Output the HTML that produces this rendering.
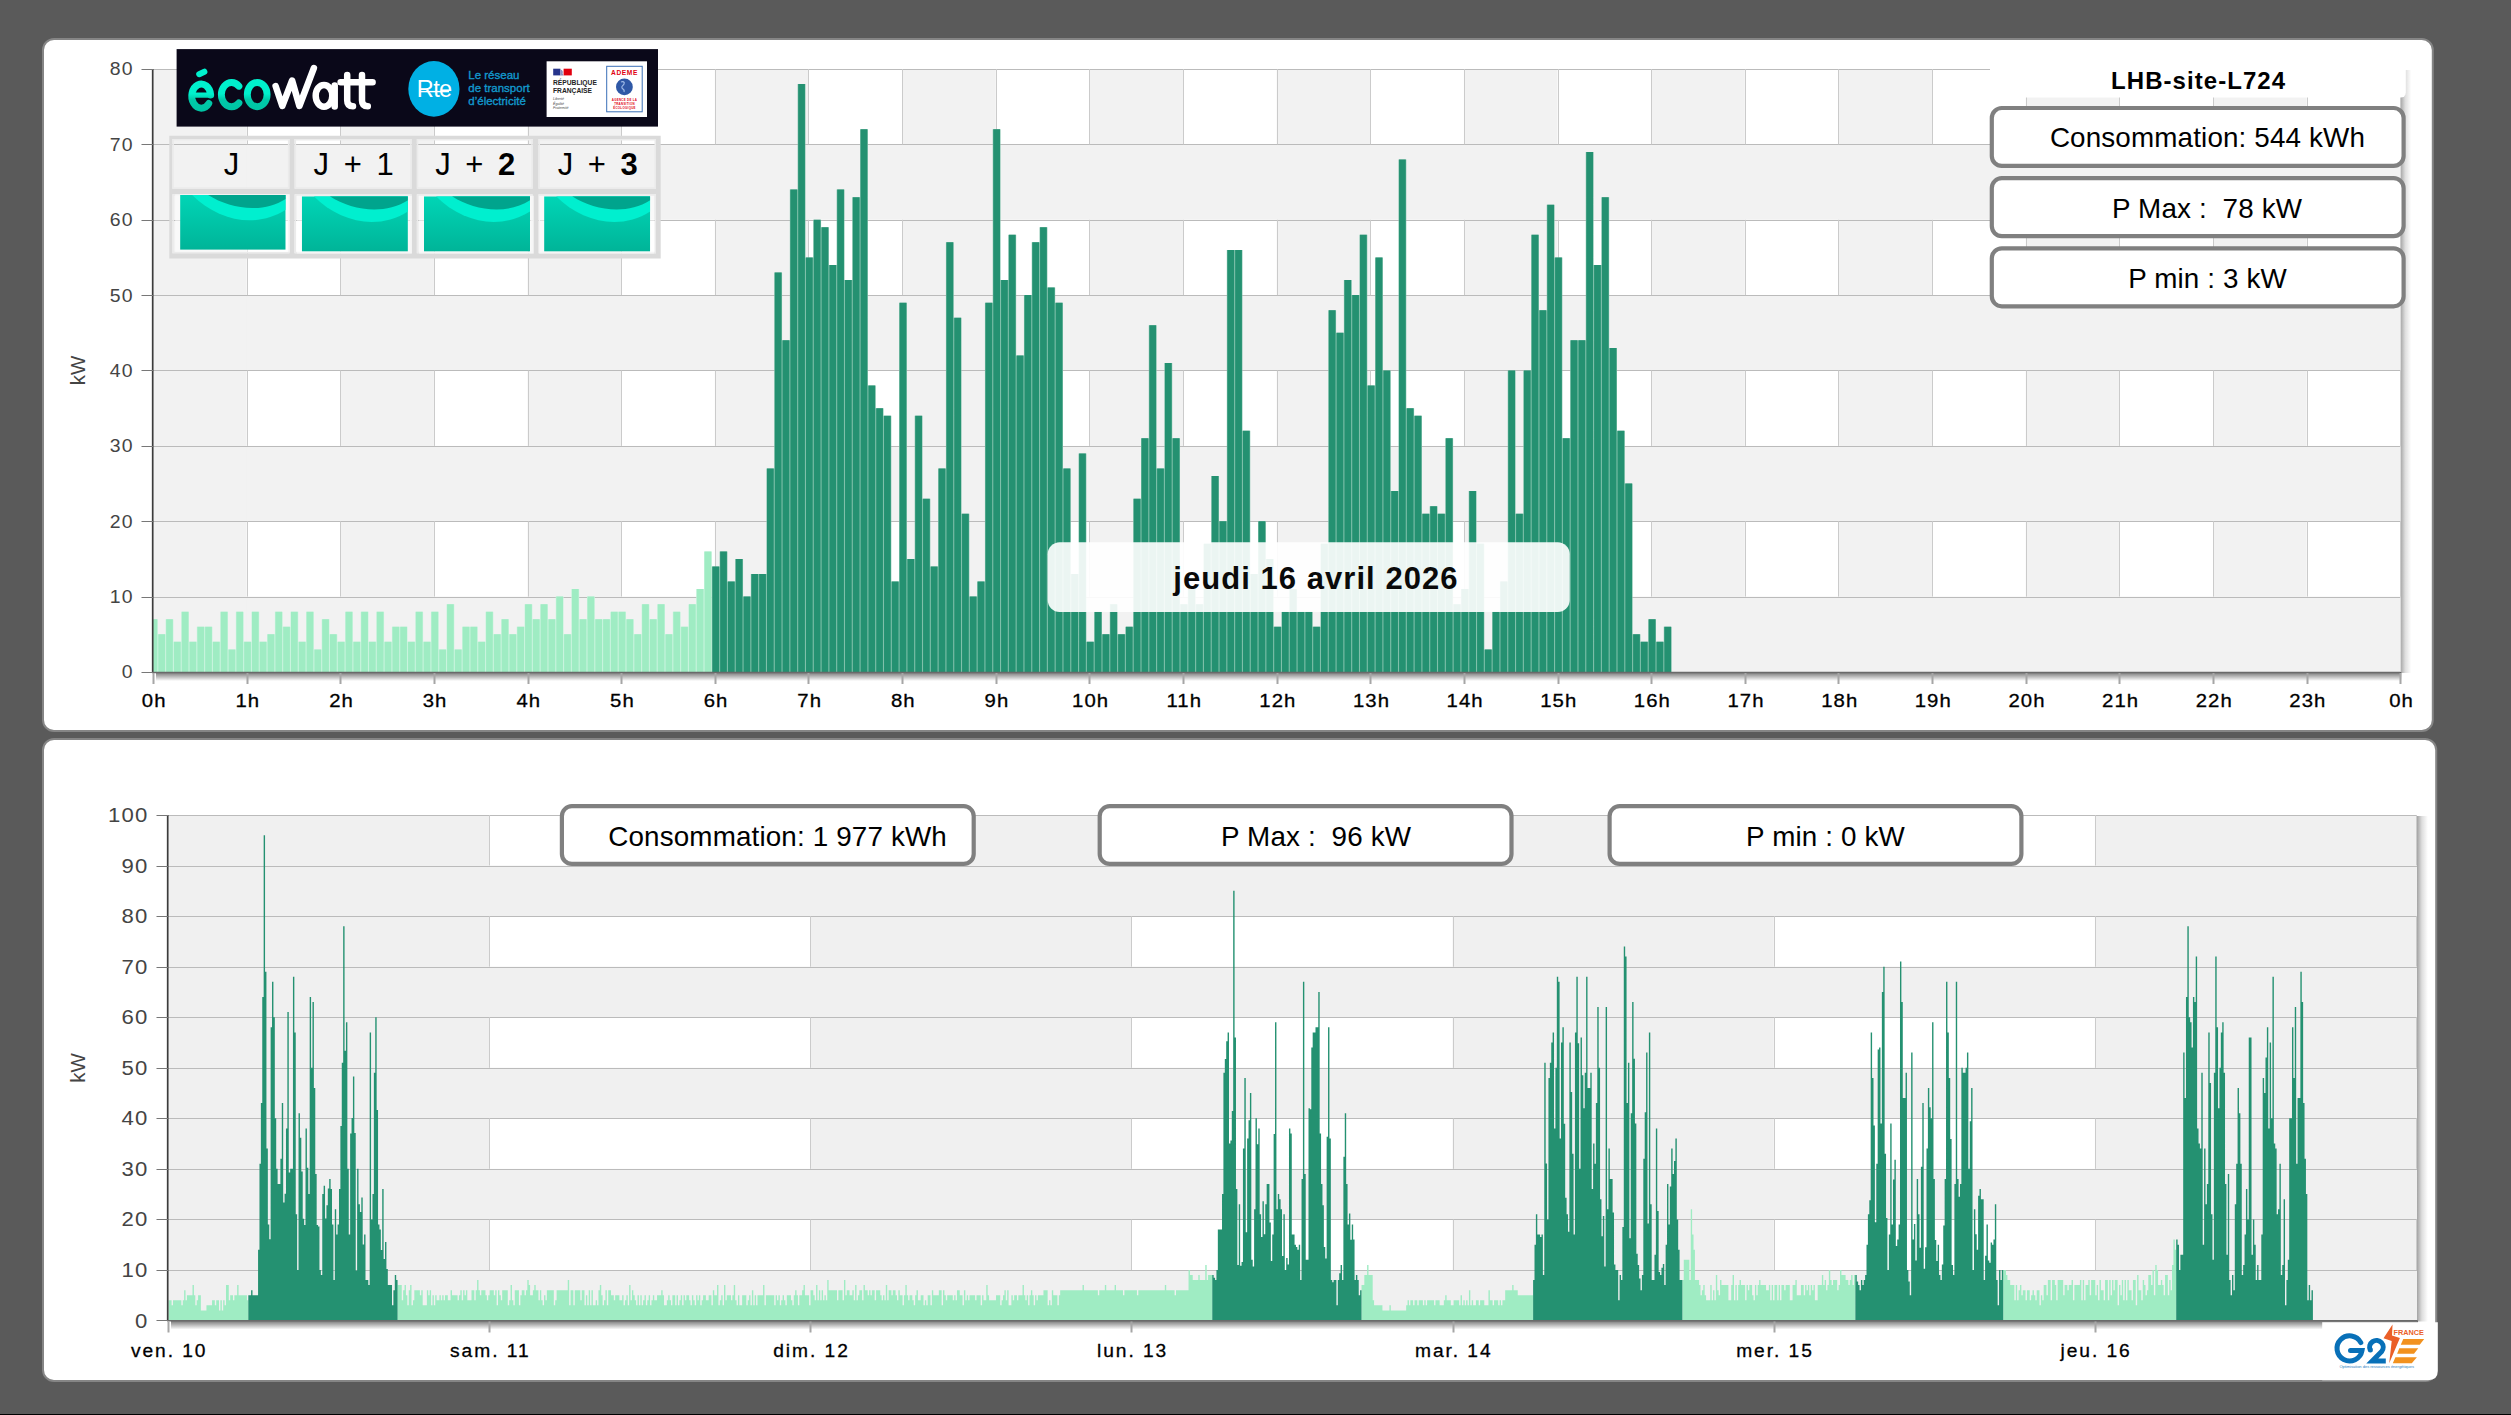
<!DOCTYPE html>
<html><head><meta charset="utf-8"><title>LHB-site-L724</title>
<style>html,body{margin:0;padding:0;width:2511px;height:1415px;overflow:hidden;background:#5a5a5a;font-family:"Liberation Sans", sans-serif}</style>
</head><body>
<svg width="2511" height="1415" viewBox="0 0 2511 1415" style="position:absolute;left:0;top:0;font-family:'Liberation Sans',sans-serif">
<defs>
<linearGradient id="shR" x1="0" x2="1" y1="0" y2="0"><stop offset="0" stop-color="#000" stop-opacity=".36"/><stop offset=".45" stop-color="#000" stop-opacity=".13"/><stop offset="1" stop-color="#000" stop-opacity="0"/></linearGradient>
<linearGradient id="shB" x1="0" x2="0" y1="0" y2="1"><stop offset="0" stop-color="#000" stop-opacity=".55"/><stop offset="1" stop-color="#000" stop-opacity="0"/></linearGradient>
<linearGradient id="teal" x1="0" x2="0" y1="0" y2="1"><stop offset="0" stop-color="#00d5b6"/><stop offset="1" stop-color="#00b498"/></linearGradient>
<linearGradient id="eco" gradientUnits="userSpaceOnUse" x1="0" x2="0" y1="70" y2="111"><stop offset="0" stop-color="#00f2ce"/><stop offset=".58" stop-color="#00f0cc"/><stop offset=".72" stop-color="#00caa9"/><stop offset="1" stop-color="#00c4a4"/></linearGradient>
<symbol id="wave" viewBox="0 0 106 55" preserveAspectRatio="none">
<rect width="106" height="55" fill="url(#teal)"/>
<path d="M12 0 C38 26 76 34 106 15 L106 0 Z" fill="#00efcf"/>
<path d="M28 0 C50 14 82 19 106 4 L106 0 Z" fill="#00a48d"/>
</symbol>
</defs>
<rect width="2511" height="1415" fill="#5a5a5a"/>
<rect y="1414" width="2511" height="1" fill="#000"/>
<rect x="43" y="39" width="2389.8" height="692" rx="11" fill="#fff" stroke="#858585" stroke-width="2"/>
<rect x="43" y="739.1" width="2393.2" height="641.9" rx="11" fill="#fff" stroke="#858585" stroke-width="2"/>
<rect x="2400.3" y="70.0" width="11" height="603.0" fill="url(#shR)"/>
<rect x="156.0" y="672.0" width="2245.3" height="9" fill="url(#shB)"/>
<rect x="153.0" y="69.0" width="2247.3" height="603.0" fill="#fff"/>
<rect x="153.0" y="596.62" width="2247.3" height="75.38" fill="#f2f2f2"/>
<rect x="153.0" y="445.88" width="2247.3" height="75.38" fill="#f2f2f2"/>
<rect x="153.0" y="295.12" width="2247.3" height="75.38" fill="#f2f2f2"/>
<rect x="153.0" y="144.38" width="2247.3" height="75.38" fill="#f2f2f2"/>
<rect x="153.00" y="69.0" width="93.64" height="603.0" fill="#f2f2f2"/>
<rect x="340.27" y="69.0" width="93.64" height="603.0" fill="#f2f2f2"/>
<rect x="527.55" y="69.0" width="93.64" height="603.0" fill="#f2f2f2"/>
<rect x="714.83" y="69.0" width="93.64" height="603.0" fill="#f2f2f2"/>
<rect x="902.10" y="69.0" width="93.64" height="603.0" fill="#f2f2f2"/>
<rect x="1089.38" y="69.0" width="93.64" height="603.0" fill="#f2f2f2"/>
<rect x="1276.65" y="69.0" width="93.64" height="603.0" fill="#f2f2f2"/>
<rect x="1463.92" y="69.0" width="93.64" height="603.0" fill="#f2f2f2"/>
<rect x="1651.20" y="69.0" width="93.64" height="603.0" fill="#f2f2f2"/>
<rect x="1838.48" y="69.0" width="93.64" height="603.0" fill="#f2f2f2"/>
<rect x="2025.75" y="69.0" width="93.64" height="603.0" fill="#f2f2f2"/>
<rect x="2213.03" y="69.0" width="93.64" height="603.0" fill="#f2f2f2"/>
<path d="M153.0 597.5H2400.3M153.0 521.5H2400.3M153.0 446.5H2400.3M153.0 370.5H2400.3M153.0 295.5H2400.3M153.0 220.5H2400.3M153.0 144.5H2400.3M153.0 69.5H2400.3" stroke="#bbb" stroke-width="1" fill="none"/>
<path d="M247.5 596.6V521.2M247.5 445.9V370.5M247.5 295.1V219.8M247.5 144.4V69.0M340.5 596.6V521.2M340.5 445.9V370.5M340.5 295.1V219.8M340.5 144.4V69.0M434.5 596.6V521.2M434.5 445.9V370.5M434.5 295.1V219.8M434.5 144.4V69.0M528.5 596.6V521.2M528.5 445.9V370.5M528.5 295.1V219.8M528.5 144.4V69.0M621.5 596.6V521.2M621.5 445.9V370.5M621.5 295.1V219.8M621.5 144.4V69.0M715.5 596.6V521.2M715.5 445.9V370.5M715.5 295.1V219.8M715.5 144.4V69.0M808.5 596.6V521.2M808.5 445.9V370.5M808.5 295.1V219.8M808.5 144.4V69.0M902.5 596.6V521.2M902.5 445.9V370.5M902.5 295.1V219.8M902.5 144.4V69.0M996.5 596.6V521.2M996.5 445.9V370.5M996.5 295.1V219.8M996.5 144.4V69.0M1089.5 596.6V521.2M1089.5 445.9V370.5M1089.5 295.1V219.8M1089.5 144.4V69.0M1183.5 596.6V521.2M1183.5 445.9V370.5M1183.5 295.1V219.8M1183.5 144.4V69.0M1277.5 596.6V521.2M1277.5 445.9V370.5M1277.5 295.1V219.8M1277.5 144.4V69.0M1370.5 596.6V521.2M1370.5 445.9V370.5M1370.5 295.1V219.8M1370.5 144.4V69.0M1464.5 596.6V521.2M1464.5 445.9V370.5M1464.5 295.1V219.8M1464.5 144.4V69.0M1558.5 596.6V521.2M1558.5 445.9V370.5M1558.5 295.1V219.8M1558.5 144.4V69.0M1651.5 596.6V521.2M1651.5 445.9V370.5M1651.5 295.1V219.8M1651.5 144.4V69.0M1745.5 596.6V521.2M1745.5 445.9V370.5M1745.5 295.1V219.8M1745.5 144.4V69.0M1838.5 596.6V521.2M1838.5 445.9V370.5M1838.5 295.1V219.8M1838.5 144.4V69.0M1932.5 596.6V521.2M1932.5 445.9V370.5M1932.5 295.1V219.8M1932.5 144.4V69.0M2026.5 596.6V521.2M2026.5 445.9V370.5M2026.5 295.1V219.8M2026.5 144.4V69.0M2119.5 596.6V521.2M2119.5 445.9V370.5M2119.5 295.1V219.8M2119.5 144.4V69.0M2213.5 596.6V521.2M2213.5 445.9V370.5M2213.5 295.1V219.8M2213.5 144.4V69.0M2307.5 596.6V521.2M2307.5 445.9V370.5M2307.5 295.1V219.8M2307.5 144.4V69.0M2400.5 596.6V521.2M2400.5 445.9V370.5M2400.5 295.1V219.8M2400.5 144.4V69.0" stroke="#cbcbcb" stroke-width="1" fill="none"/>
<path d="M153.00 672.0V619.24H157.80V672.0ZM157.80 672.0V634.31H165.60V672.0ZM165.60 672.0V619.24H173.41V672.0ZM173.41 672.0V641.85H181.21V672.0ZM181.21 672.0V611.70H189.01V672.0ZM189.01 672.0V641.85H196.82V672.0ZM196.82 672.0V626.77H204.62V672.0ZM204.62 672.0V626.77H212.42V672.0ZM212.42 672.0V641.85H220.23V672.0ZM220.23 672.0V611.70H228.03V672.0ZM228.03 672.0V649.39H235.83V672.0ZM235.83 672.0V611.70H243.64V672.0ZM243.64 672.0V641.85H251.44V672.0ZM251.44 672.0V611.70H259.24V672.0ZM259.24 672.0V641.85H267.05V672.0ZM267.05 672.0V634.31H274.85V672.0ZM274.85 672.0V611.70H282.65V672.0ZM282.65 672.0V626.77H290.45V672.0ZM290.45 672.0V611.70H298.26V672.0ZM298.26 672.0V641.85H306.06V672.0ZM306.06 672.0V611.70H313.86V672.0ZM313.86 672.0V649.39H321.67V672.0ZM321.67 672.0V619.24H329.47V672.0ZM329.47 672.0V634.31H337.27V672.0ZM337.27 672.0V641.85H345.08V672.0ZM345.08 672.0V611.70H352.88V672.0ZM352.88 672.0V641.85H360.68V672.0ZM360.68 672.0V611.70H368.49V672.0ZM368.49 672.0V641.85H376.29V672.0ZM376.29 672.0V611.70H384.09V672.0ZM384.09 672.0V641.85H391.90V672.0ZM391.90 672.0V626.77H399.70V672.0ZM399.70 672.0V626.77H407.50V672.0ZM407.50 672.0V641.85H415.30V672.0ZM415.30 672.0V611.70H423.11V672.0ZM423.11 672.0V641.85H430.91V672.0ZM430.91 672.0V611.70H438.71V672.0ZM438.71 672.0V649.39H446.52V672.0ZM446.52 672.0V604.16H454.32V672.0ZM454.32 672.0V649.39H462.12V672.0ZM462.12 672.0V626.77H469.93V672.0ZM469.93 672.0V626.77H477.73V672.0ZM477.73 672.0V641.85H485.53V672.0ZM485.53 672.0V611.70H493.34V672.0ZM493.34 672.0V634.31H501.14V672.0ZM501.14 672.0V619.24H508.94V672.0ZM508.94 672.0V634.31H516.75V672.0ZM516.75 672.0V626.77H524.55V672.0ZM524.55 672.0V604.16H532.35V672.0ZM532.35 672.0V619.24H540.15V672.0ZM540.15 672.0V604.16H547.96V672.0ZM547.96 672.0V619.24H555.76V672.0ZM555.76 672.0V596.62H563.56V672.0ZM563.56 672.0V634.31H571.37V672.0ZM571.37 672.0V589.09H579.17V672.0ZM579.17 672.0V619.24H586.97V672.0ZM586.97 672.0V596.62H594.78V672.0ZM594.78 672.0V619.24H602.58V672.0ZM602.58 672.0V619.24H610.38V672.0ZM610.38 672.0V611.70H618.19V672.0ZM618.19 672.0V611.70H625.99V672.0ZM625.99 672.0V619.24H633.79V672.0ZM633.79 672.0V634.31H641.60V672.0ZM641.60 672.0V604.16H649.40V672.0ZM649.40 672.0V619.24H657.20V672.0ZM657.20 672.0V604.16H665.00V672.0ZM665.00 672.0V634.31H672.81V672.0ZM672.81 672.0V611.70H680.61V672.0ZM680.61 672.0V626.77H688.41V672.0ZM688.41 672.0V604.16H696.22V672.0ZM696.22 672.0V589.09H704.02V672.0ZM704.02 672.0V551.40H711.82V672.0Z" fill="#c9f4de"/>
<path d="M153.00 672.0V619.24H157.25V672.0ZM158.35 672.0V634.31H165.05V672.0ZM166.15 672.0V619.24H172.86V672.0ZM173.96 672.0V641.85H180.66V672.0ZM181.76 672.0V611.70H188.46V672.0ZM189.56 672.0V641.85H196.27V672.0ZM197.37 672.0V626.77H204.07V672.0ZM205.17 672.0V626.77H211.87V672.0ZM212.97 672.0V641.85H219.68V672.0ZM220.78 672.0V611.70H227.48V672.0ZM228.58 672.0V649.39H235.28V672.0ZM236.38 672.0V611.70H243.09V672.0ZM244.19 672.0V641.85H250.89V672.0ZM251.99 672.0V611.70H258.69V672.0ZM259.79 672.0V641.85H266.50V672.0ZM267.60 672.0V634.31H274.30V672.0ZM275.40 672.0V611.70H282.10V672.0ZM283.20 672.0V626.77H289.90V672.0ZM291.00 672.0V611.70H297.71V672.0ZM298.81 672.0V641.85H305.51V672.0ZM306.61 672.0V611.70H313.31V672.0ZM314.41 672.0V649.39H321.12V672.0ZM322.22 672.0V619.24H328.92V672.0ZM330.02 672.0V634.31H336.72V672.0ZM337.82 672.0V641.85H344.53V672.0ZM345.63 672.0V611.70H352.33V672.0ZM353.43 672.0V641.85H360.13V672.0ZM361.23 672.0V611.70H367.94V672.0ZM369.04 672.0V641.85H375.74V672.0ZM376.84 672.0V611.70H383.54V672.0ZM384.64 672.0V641.85H391.35V672.0ZM392.45 672.0V626.77H399.15V672.0ZM400.25 672.0V626.77H406.95V672.0ZM408.05 672.0V641.85H414.75V672.0ZM415.85 672.0V611.70H422.56V672.0ZM423.66 672.0V641.85H430.36V672.0ZM431.46 672.0V611.70H438.16V672.0ZM439.26 672.0V649.39H445.97V672.0ZM447.07 672.0V604.16H453.77V672.0ZM454.87 672.0V649.39H461.57V672.0ZM462.67 672.0V626.77H469.38V672.0ZM470.48 672.0V626.77H477.18V672.0ZM478.28 672.0V641.85H484.98V672.0ZM486.08 672.0V611.70H492.79V672.0ZM493.89 672.0V634.31H500.59V672.0ZM501.69 672.0V619.24H508.39V672.0ZM509.49 672.0V634.31H516.20V672.0ZM517.30 672.0V626.77H524.00V672.0ZM525.10 672.0V604.16H531.80V672.0ZM532.90 672.0V619.24H539.60V672.0ZM540.70 672.0V604.16H547.41V672.0ZM548.51 672.0V619.24H555.21V672.0ZM556.31 672.0V596.62H563.01V672.0ZM564.11 672.0V634.31H570.82V672.0ZM571.92 672.0V589.09H578.62V672.0ZM579.72 672.0V619.24H586.42V672.0ZM587.52 672.0V596.62H594.23V672.0ZM595.33 672.0V619.24H602.03V672.0ZM603.13 672.0V619.24H609.83V672.0ZM610.93 672.0V611.70H617.64V672.0ZM618.74 672.0V611.70H625.44V672.0ZM626.54 672.0V619.24H633.24V672.0ZM634.34 672.0V634.31H641.05V672.0ZM642.15 672.0V604.16H648.85V672.0ZM649.95 672.0V619.24H656.65V672.0ZM657.75 672.0V604.16H664.45V672.0ZM665.55 672.0V634.31H672.26V672.0ZM673.36 672.0V611.70H680.06V672.0ZM681.16 672.0V626.77H687.86V672.0ZM688.96 672.0V604.16H695.67V672.0ZM696.77 672.0V589.09H703.47V672.0ZM704.57 672.0V551.40H711.27V672.0Z" fill="#9fecc3"/>
<path d="M711.82 672.0V566.48H719.63V672.0ZM719.63 672.0V551.40H727.43V672.0ZM727.43 672.0V581.55H735.23V672.0ZM735.23 672.0V558.94H743.04V672.0ZM743.04 672.0V596.62H750.84V672.0ZM750.84 672.0V574.01H758.64V672.0ZM758.64 672.0V574.01H766.45V672.0ZM766.45 672.0V468.49H774.25V672.0ZM774.25 672.0V272.51H782.05V672.0ZM782.05 672.0V340.35H789.85V672.0ZM789.85 672.0V189.60H797.66V672.0ZM797.66 672.0V84.08H805.46V672.0ZM805.46 672.0V257.44H813.26V672.0ZM813.26 672.0V219.75H821.07V672.0ZM821.07 672.0V227.29H828.87V672.0ZM828.87 672.0V264.98H836.67V672.0ZM836.67 672.0V189.60H844.48V672.0ZM844.48 672.0V280.05H852.28V672.0ZM852.28 672.0V197.14H860.08V672.0ZM860.08 672.0V129.30H867.89V672.0ZM867.89 672.0V385.57H875.69V672.0ZM875.69 672.0V408.19H883.49V672.0ZM883.49 672.0V415.73H891.30V672.0ZM891.30 672.0V581.55H899.10V672.0ZM899.10 672.0V302.66H906.90V672.0ZM906.90 672.0V558.94H914.70V672.0ZM914.70 672.0V415.73H922.51V672.0ZM922.51 672.0V498.64H930.31V672.0ZM930.31 672.0V566.48H938.11V672.0ZM938.11 672.0V468.49H945.92V672.0ZM945.92 672.0V242.36H953.72V672.0ZM953.72 672.0V317.74H961.52V672.0ZM961.52 672.0V513.71H969.33V672.0ZM969.33 672.0V596.62H977.13V672.0ZM977.13 672.0V581.55H984.93V672.0ZM984.93 672.0V302.66H992.74V672.0ZM992.74 672.0V129.30H1000.54V672.0ZM1000.54 672.0V280.05H1008.34V672.0ZM1008.34 672.0V234.83H1016.15V672.0ZM1016.15 672.0V355.43H1023.95V672.0ZM1023.95 672.0V295.12H1031.75V672.0ZM1031.75 672.0V242.36H1039.55V672.0ZM1039.55 672.0V227.29H1047.36V672.0ZM1047.36 672.0V287.59H1055.16V672.0ZM1055.16 672.0V302.66H1062.96V672.0ZM1062.96 672.0V468.49H1070.77V672.0ZM1070.77 672.0V574.01H1078.57V672.0ZM1078.57 672.0V453.41H1086.37V672.0ZM1086.37 672.0V641.85H1094.18V672.0ZM1094.18 672.0V611.70H1101.98V672.0ZM1101.98 672.0V634.31H1109.78V672.0ZM1109.78 672.0V604.16H1117.59V672.0ZM1117.59 672.0V634.31H1125.39V672.0ZM1125.39 672.0V626.77H1133.19V672.0ZM1133.19 672.0V498.64H1141.00V672.0ZM1141.00 672.0V438.34H1148.80V672.0ZM1148.80 672.0V325.28H1156.60V672.0ZM1156.60 672.0V468.49H1164.40V672.0ZM1164.40 672.0V362.96H1172.21V672.0ZM1172.21 672.0V438.34H1180.01V672.0ZM1180.01 672.0V604.16H1187.81V672.0ZM1187.81 672.0V589.09H1195.62V672.0ZM1195.62 672.0V604.16H1203.42V672.0ZM1203.42 672.0V543.86H1211.22V672.0ZM1211.22 672.0V476.02H1219.03V672.0ZM1219.03 672.0V521.25H1226.83V672.0ZM1226.83 672.0V249.90H1234.63V672.0ZM1234.63 672.0V249.90H1242.44V672.0ZM1242.44 672.0V430.80H1250.24V672.0ZM1250.24 672.0V574.01H1258.04V672.0ZM1258.04 672.0V521.25H1265.85V672.0ZM1265.85 672.0V558.94H1273.65V672.0ZM1273.65 672.0V626.77H1281.45V672.0ZM1281.45 672.0V611.70H1289.25V672.0ZM1289.25 672.0V589.09H1297.06V672.0ZM1297.06 672.0V611.70H1304.86V672.0ZM1304.86 672.0V611.70H1312.66V672.0ZM1312.66 672.0V626.77H1320.47V672.0ZM1320.47 672.0V543.86H1328.27V672.0ZM1328.27 672.0V310.20H1336.07V672.0ZM1336.07 672.0V332.81H1343.88V672.0ZM1343.88 672.0V280.05H1351.68V672.0ZM1351.68 672.0V295.12H1359.48V672.0ZM1359.48 672.0V234.83H1367.29V672.0ZM1367.29 672.0V385.57H1375.09V672.0ZM1375.09 672.0V257.44H1382.89V672.0ZM1382.89 672.0V370.50H1390.70V672.0ZM1390.70 672.0V491.10H1398.50V672.0ZM1398.50 672.0V159.45H1406.30V672.0ZM1406.30 672.0V408.19H1414.10V672.0ZM1414.10 672.0V415.73H1421.91V672.0ZM1421.91 672.0V513.71H1429.71V672.0ZM1429.71 672.0V506.18H1437.51V672.0ZM1437.51 672.0V513.71H1445.32V672.0ZM1445.32 672.0V438.34H1453.12V672.0ZM1453.12 672.0V604.16H1460.92V672.0ZM1460.92 672.0V589.09H1468.73V672.0ZM1468.73 672.0V491.10H1476.53V672.0ZM1476.53 672.0V543.86H1484.33V672.0ZM1484.33 672.0V649.39H1492.14V672.0ZM1492.14 672.0V611.70H1499.94V672.0ZM1499.94 672.0V581.55H1507.74V672.0ZM1507.74 672.0V370.50H1515.55V672.0ZM1515.55 672.0V513.71H1523.35V672.0ZM1523.35 672.0V370.50H1531.15V672.0ZM1531.15 672.0V234.83H1538.95V672.0ZM1538.95 672.0V310.20H1546.76V672.0ZM1546.76 672.0V204.68H1554.56V672.0ZM1554.56 672.0V257.44H1562.36V672.0ZM1562.36 672.0V438.34H1570.17V672.0ZM1570.17 672.0V340.35H1577.97V672.0ZM1577.97 672.0V340.35H1585.77V672.0ZM1585.77 672.0V151.91H1593.58V672.0ZM1593.58 672.0V264.98H1601.38V672.0ZM1601.38 672.0V197.14H1609.18V672.0ZM1609.18 672.0V347.89H1616.99V672.0ZM1616.99 672.0V430.80H1624.79V672.0ZM1624.79 672.0V483.56H1632.59V672.0ZM1632.59 672.0V634.31H1640.40V672.0ZM1640.40 672.0V641.85H1648.20V672.0ZM1648.20 672.0V619.24H1656.00V672.0ZM1656.00 672.0V641.85H1663.80V672.0ZM1663.80 672.0V626.77H1671.61V672.0Z" fill="#7fc0aa"/>
<path d="M712.37 672.0V566.48H719.08V672.0ZM720.18 672.0V551.40H726.88V672.0ZM727.98 672.0V581.55H734.68V672.0ZM735.78 672.0V558.94H742.49V672.0ZM743.59 672.0V596.62H750.29V672.0ZM751.39 672.0V574.01H758.09V672.0ZM759.19 672.0V574.01H765.90V672.0ZM767.00 672.0V468.49H773.70V672.0ZM774.80 672.0V272.51H781.50V672.0ZM782.60 672.0V340.35H789.30V672.0ZM790.40 672.0V189.60H797.11V672.0ZM798.21 672.0V84.08H804.91V672.0ZM806.01 672.0V257.44H812.71V672.0ZM813.81 672.0V219.75H820.52V672.0ZM821.62 672.0V227.29H828.32V672.0ZM829.42 672.0V264.98H836.12V672.0ZM837.22 672.0V189.60H843.93V672.0ZM845.03 672.0V280.05H851.73V672.0ZM852.83 672.0V197.14H859.53V672.0ZM860.63 672.0V129.30H867.34V672.0ZM868.44 672.0V385.57H875.14V672.0ZM876.24 672.0V408.19H882.94V672.0ZM884.04 672.0V415.73H890.75V672.0ZM891.85 672.0V581.55H898.55V672.0ZM899.65 672.0V302.66H906.35V672.0ZM907.45 672.0V558.94H914.15V672.0ZM915.25 672.0V415.73H921.96V672.0ZM923.06 672.0V498.64H929.76V672.0ZM930.86 672.0V566.48H937.56V672.0ZM938.66 672.0V468.49H945.37V672.0ZM946.47 672.0V242.36H953.17V672.0ZM954.27 672.0V317.74H960.97V672.0ZM962.07 672.0V513.71H968.78V672.0ZM969.88 672.0V596.62H976.58V672.0ZM977.68 672.0V581.55H984.38V672.0ZM985.48 672.0V302.66H992.19V672.0ZM993.29 672.0V129.30H999.99V672.0ZM1001.09 672.0V280.05H1007.79V672.0ZM1008.89 672.0V234.83H1015.60V672.0ZM1016.70 672.0V355.43H1023.40V672.0ZM1024.50 672.0V295.12H1031.20V672.0ZM1032.30 672.0V242.36H1039.00V672.0ZM1040.10 672.0V227.29H1046.81V672.0ZM1047.91 672.0V287.59H1054.61V672.0ZM1055.71 672.0V302.66H1062.41V672.0ZM1063.51 672.0V468.49H1070.22V672.0ZM1071.32 672.0V574.01H1078.02V672.0ZM1079.12 672.0V453.41H1085.82V672.0ZM1086.92 672.0V641.85H1093.63V672.0ZM1094.73 672.0V611.70H1101.43V672.0ZM1102.53 672.0V634.31H1109.23V672.0ZM1110.33 672.0V604.16H1117.04V672.0ZM1118.14 672.0V634.31H1124.84V672.0ZM1125.94 672.0V626.77H1132.64V672.0ZM1133.74 672.0V498.64H1140.45V672.0ZM1141.55 672.0V438.34H1148.25V672.0ZM1149.35 672.0V325.28H1156.05V672.0ZM1157.15 672.0V468.49H1163.85V672.0ZM1164.95 672.0V362.96H1171.66V672.0ZM1172.76 672.0V438.34H1179.46V672.0ZM1180.56 672.0V604.16H1187.26V672.0ZM1188.36 672.0V589.09H1195.07V672.0ZM1196.17 672.0V604.16H1202.87V672.0ZM1203.97 672.0V543.86H1210.67V672.0ZM1211.77 672.0V476.02H1218.48V672.0ZM1219.58 672.0V521.25H1226.28V672.0ZM1227.38 672.0V249.90H1234.08V672.0ZM1235.18 672.0V249.90H1241.89V672.0ZM1242.99 672.0V430.80H1249.69V672.0ZM1250.79 672.0V574.01H1257.49V672.0ZM1258.59 672.0V521.25H1265.30V672.0ZM1266.40 672.0V558.94H1273.10V672.0ZM1274.20 672.0V626.77H1280.90V672.0ZM1282.00 672.0V611.70H1288.70V672.0ZM1289.80 672.0V589.09H1296.51V672.0ZM1297.61 672.0V611.70H1304.31V672.0ZM1305.41 672.0V611.70H1312.11V672.0ZM1313.21 672.0V626.77H1319.92V672.0ZM1321.02 672.0V543.86H1327.72V672.0ZM1328.82 672.0V310.20H1335.52V672.0ZM1336.62 672.0V332.81H1343.33V672.0ZM1344.43 672.0V280.05H1351.13V672.0ZM1352.23 672.0V295.12H1358.93V672.0ZM1360.03 672.0V234.83H1366.74V672.0ZM1367.84 672.0V385.57H1374.54V672.0ZM1375.64 672.0V257.44H1382.34V672.0ZM1383.44 672.0V370.50H1390.15V672.0ZM1391.25 672.0V491.10H1397.95V672.0ZM1399.05 672.0V159.45H1405.75V672.0ZM1406.85 672.0V408.19H1413.55V672.0ZM1414.65 672.0V415.73H1421.36V672.0ZM1422.46 672.0V513.71H1429.16V672.0ZM1430.26 672.0V506.18H1436.96V672.0ZM1438.06 672.0V513.71H1444.77V672.0ZM1445.87 672.0V438.34H1452.57V672.0ZM1453.67 672.0V604.16H1460.37V672.0ZM1461.47 672.0V589.09H1468.18V672.0ZM1469.28 672.0V491.10H1475.98V672.0ZM1477.08 672.0V543.86H1483.78V672.0ZM1484.88 672.0V649.39H1491.59V672.0ZM1492.69 672.0V611.70H1499.39V672.0ZM1500.49 672.0V581.55H1507.19V672.0ZM1508.29 672.0V370.50H1515.00V672.0ZM1516.10 672.0V513.71H1522.80V672.0ZM1523.90 672.0V370.50H1530.60V672.0ZM1531.70 672.0V234.83H1538.40V672.0ZM1539.50 672.0V310.20H1546.21V672.0ZM1547.31 672.0V204.68H1554.01V672.0ZM1555.11 672.0V257.44H1561.81V672.0ZM1562.91 672.0V438.34H1569.62V672.0ZM1570.72 672.0V340.35H1577.42V672.0ZM1578.52 672.0V340.35H1585.22V672.0ZM1586.32 672.0V151.91H1593.03V672.0ZM1594.13 672.0V264.98H1600.83V672.0ZM1601.93 672.0V197.14H1608.63V672.0ZM1609.73 672.0V347.89H1616.44V672.0ZM1617.54 672.0V430.80H1624.24V672.0ZM1625.34 672.0V483.56H1632.04V672.0ZM1633.14 672.0V634.31H1639.85V672.0ZM1640.95 672.0V641.85H1647.65V672.0ZM1648.75 672.0V619.24H1655.45V672.0ZM1656.55 672.0V641.85H1663.25V672.0ZM1664.35 672.0V626.77H1671.06V672.0Z" fill="#249171"/>
<path d="M152.7 69.0V672.5" stroke="#3c3c3c" stroke-width="1.7" fill="none"/>
<path d="M152.0 672.5H2400.3" stroke="#6a6a6a" stroke-width="1.6" fill="none"/>
<path d="M141.5 672.5H153.0M141.5 597.5H153.0M141.5 521.5H153.0M141.5 446.5H153.0M141.5 370.5H153.0M141.5 295.5H153.0M141.5 220.5H153.0M141.5 144.5H153.0M141.5 69.5H153.0" stroke="#777" stroke-width="1.2" fill="none"/>
<path d="M153.5 673.0V684.0M247.5 673.0V684.0M340.5 673.0V684.0M434.5 673.0V684.0M528.5 673.0V684.0M621.5 673.0V684.0M715.5 673.0V684.0M808.5 673.0V684.0M902.5 673.0V684.0M996.5 673.0V684.0M1089.5 673.0V684.0M1183.5 673.0V684.0M1277.5 673.0V684.0M1370.5 673.0V684.0M1464.5 673.0V684.0M1558.5 673.0V684.0M1651.5 673.0V684.0M1745.5 673.0V684.0M1838.5 673.0V684.0M1932.5 673.0V684.0M2026.5 673.0V684.0M2119.5 673.0V684.0M2213.5 673.0V684.0M2307.5 673.0V684.0M2400.5 673.0V684.0" stroke="#a6a6a6" stroke-width="2" fill="none"/>
<text transform="translate(133.6 678.4) scale(1.08 1)" text-anchor="end" font-size="18" letter-spacing="1" fill="#444">0</text>
<text transform="translate(133.6 603.0) scale(1.08 1)" text-anchor="end" font-size="18" letter-spacing="1" fill="#444">10</text>
<text transform="translate(133.6 527.6) scale(1.08 1)" text-anchor="end" font-size="18" letter-spacing="1" fill="#444">20</text>
<text transform="translate(133.6 452.3) scale(1.08 1)" text-anchor="end" font-size="18" letter-spacing="1" fill="#444">30</text>
<text transform="translate(133.6 376.9) scale(1.08 1)" text-anchor="end" font-size="18" letter-spacing="1" fill="#444">40</text>
<text transform="translate(133.6 301.5) scale(1.08 1)" text-anchor="end" font-size="18" letter-spacing="1" fill="#444">50</text>
<text transform="translate(133.6 226.2) scale(1.08 1)" text-anchor="end" font-size="18" letter-spacing="1" fill="#444">60</text>
<text transform="translate(133.6 150.8) scale(1.08 1)" text-anchor="end" font-size="18" letter-spacing="1" fill="#444">70</text>
<text transform="translate(133.6 75.4) scale(1.08 1)" text-anchor="end" font-size="18" letter-spacing="1" fill="#444">80</text>
<text transform="translate(154.2 707.2) scale(1.06 1)" text-anchor="middle" font-size="19.2" letter-spacing="1" fill="#000" stroke="#000" stroke-width=".3">0h</text>
<text transform="translate(247.8 707.2) scale(1.06 1)" text-anchor="middle" font-size="19.2" letter-spacing="1" fill="#000" stroke="#000" stroke-width=".3">1h</text>
<text transform="translate(341.5 707.2) scale(1.06 1)" text-anchor="middle" font-size="19.2" letter-spacing="1" fill="#000" stroke="#000" stroke-width=".3">2h</text>
<text transform="translate(435.1 707.2) scale(1.06 1)" text-anchor="middle" font-size="19.2" letter-spacing="1" fill="#000" stroke="#000" stroke-width=".3">3h</text>
<text transform="translate(528.8 707.2) scale(1.06 1)" text-anchor="middle" font-size="19.2" letter-spacing="1" fill="#000" stroke="#000" stroke-width=".3">4h</text>
<text transform="translate(622.4 707.2) scale(1.06 1)" text-anchor="middle" font-size="19.2" letter-spacing="1" fill="#000" stroke="#000" stroke-width=".3">5h</text>
<text transform="translate(716.0 707.2) scale(1.06 1)" text-anchor="middle" font-size="19.2" letter-spacing="1" fill="#000" stroke="#000" stroke-width=".3">6h</text>
<text transform="translate(809.7 707.2) scale(1.06 1)" text-anchor="middle" font-size="19.2" letter-spacing="1" fill="#000" stroke="#000" stroke-width=".3">7h</text>
<text transform="translate(903.3 707.2) scale(1.06 1)" text-anchor="middle" font-size="19.2" letter-spacing="1" fill="#000" stroke="#000" stroke-width=".3">8h</text>
<text transform="translate(996.9 707.2) scale(1.06 1)" text-anchor="middle" font-size="19.2" letter-spacing="1" fill="#000" stroke="#000" stroke-width=".3">9h</text>
<text transform="translate(1090.6 707.2) scale(1.06 1)" text-anchor="middle" font-size="19.2" letter-spacing="1" fill="#000" stroke="#000" stroke-width=".3">10h</text>
<text transform="translate(1184.2 707.2) scale(1.06 1)" text-anchor="middle" font-size="19.2" letter-spacing="1" fill="#000" stroke="#000" stroke-width=".3">11h</text>
<text transform="translate(1277.9 707.2) scale(1.06 1)" text-anchor="middle" font-size="19.2" letter-spacing="1" fill="#000" stroke="#000" stroke-width=".3">12h</text>
<text transform="translate(1371.5 707.2) scale(1.06 1)" text-anchor="middle" font-size="19.2" letter-spacing="1" fill="#000" stroke="#000" stroke-width=".3">13h</text>
<text transform="translate(1465.1 707.2) scale(1.06 1)" text-anchor="middle" font-size="19.2" letter-spacing="1" fill="#000" stroke="#000" stroke-width=".3">14h</text>
<text transform="translate(1558.8 707.2) scale(1.06 1)" text-anchor="middle" font-size="19.2" letter-spacing="1" fill="#000" stroke="#000" stroke-width=".3">15h</text>
<text transform="translate(1652.4 707.2) scale(1.06 1)" text-anchor="middle" font-size="19.2" letter-spacing="1" fill="#000" stroke="#000" stroke-width=".3">16h</text>
<text transform="translate(1746.0 707.2) scale(1.06 1)" text-anchor="middle" font-size="19.2" letter-spacing="1" fill="#000" stroke="#000" stroke-width=".3">17h</text>
<text transform="translate(1839.7 707.2) scale(1.06 1)" text-anchor="middle" font-size="19.2" letter-spacing="1" fill="#000" stroke="#000" stroke-width=".3">18h</text>
<text transform="translate(1933.3 707.2) scale(1.06 1)" text-anchor="middle" font-size="19.2" letter-spacing="1" fill="#000" stroke="#000" stroke-width=".3">19h</text>
<text transform="translate(2027.0 707.2) scale(1.06 1)" text-anchor="middle" font-size="19.2" letter-spacing="1" fill="#000" stroke="#000" stroke-width=".3">20h</text>
<text transform="translate(2120.6 707.2) scale(1.06 1)" text-anchor="middle" font-size="19.2" letter-spacing="1" fill="#000" stroke="#000" stroke-width=".3">21h</text>
<text transform="translate(2214.2 707.2) scale(1.06 1)" text-anchor="middle" font-size="19.2" letter-spacing="1" fill="#000" stroke="#000" stroke-width=".3">22h</text>
<text transform="translate(2307.9 707.2) scale(1.06 1)" text-anchor="middle" font-size="19.2" letter-spacing="1" fill="#000" stroke="#000" stroke-width=".3">23h</text>
<text transform="translate(2401.5 707.2) scale(1.06 1)" text-anchor="middle" font-size="19.2" letter-spacing="1" fill="#000" stroke="#000" stroke-width=".3">0h</text>
<text transform="translate(84.5 370.5) rotate(-90)" text-anchor="middle" font-size="20.5" fill="#444">kW</text>
<rect x="1990" y="50" width="415.8" height="47.6" rx="5" fill="#fff"/>
<text x="2198.6" y="88.7" text-anchor="middle" font-size="24" font-weight="bold" letter-spacing="1.05" fill="#000">LHB-site-L724</text>
<rect x="1991.80" y="108.00" width="411.80" height="57.90" rx="10" fill="#fff" stroke="#808080" stroke-width="4.2"/>
<text x="2207.5" y="147.4" text-anchor="middle" font-size="27.8" letter-spacing=".15" fill="#000" xml:space="preserve">Consommation: 544 kWh</text>
<rect x="1991.80" y="178.20" width="411.80" height="57.90" rx="10" fill="#fff" stroke="#808080" stroke-width="4.2"/>
<text x="2207.1" y="217.6" text-anchor="middle" font-size="27.8" letter-spacing=".15" fill="#000" xml:space="preserve">P Max :  78 kW</text>
<rect x="1991.80" y="248.40" width="411.80" height="57.90" rx="10" fill="#fff" stroke="#808080" stroke-width="4.2"/>
<text x="2207.6" y="287.8" text-anchor="middle" font-size="27.8" letter-spacing=".15" fill="#000" xml:space="preserve">P min : 3 kW</text>
<rect x="1047.7" y="542.3" width="522" height="69.7" rx="12" fill="#fff" fill-opacity=".91"/>
<text x="1315.9" y="588.8" text-anchor="middle" font-size="31" font-weight="bold" letter-spacing="1.05" fill="#0a0a0a">jeudi 16 avril 2026</text>
<rect x="176.6" y="49.1" width="481.4" height="77.5" fill="#0a0819"/>
<g fill="none" stroke="url(#eco)" stroke-width="6.9" stroke-linecap="round" stroke-linejoin="round">
<path d="M210.7 95A9.5 12.1 0 1 0 208.8 103.4"/>
<path d="M193 95.2H210.5" stroke-width="5.2"/>
<path d="M199.2 74.2L204.4 71.7" stroke-width="6"/>
<path d="M238.9 86.2A10.2 12.1 0 1 0 238.9 103"/>
<ellipse cx="257.2" cy="94.6" rx="9.9" ry="12.1"/>
</g>
<g fill="none" stroke="#fff" stroke-width="6.5" stroke-linecap="round" stroke-linejoin="round">
<path d="M275.6 86L282.3 106L292.1 80.5L299.4 106L313.9 68"/>
<ellipse cx="324" cy="95.8" rx="8.3" ry="10.9"/>
<path d="M334.7 85.5V106.5"/>
<path d="M347.2 75V100.5Q347.2 106.2 353 106.2M362 75V100.5Q362 106.2 367.8 106.2M340.6 82.2H372.6"/>
</g>
<ellipse cx="433.9" cy="88.9" rx="25.6" ry="27.8" fill="#00b0e4"/>
<text x="434.2" y="96.6" text-anchor="middle" font-size="23.5" fill="#fff" letter-spacing="-.6">Rte</text>
<path d="M420 91.6H449" stroke="#fff" stroke-width="1.4"/>
<g font-size="11.5" fill="#1298cc" stroke="#1298cc" stroke-width=".35"><text x="468.3" y="79">Le réseau</text><text x="468.3" y="92">de transport</text><text x="468.3" y="105">d’électricité</text></g>
<rect x="546.6" y="61.3" width="100.4" height="55.7" fill="#fff"/>
<rect x="553.2" y="68.7" width="7.2" height="6.7" fill="#27348b"/><rect x="563.6" y="68.7" width="8.2" height="6.7" fill="#e1000f"/><path d="M560.4 69.5c2 .5 3 2 2.2 4l1 1.9h-3.2z" fill="#8d93c4"/>
<g font-size="6.7" font-weight="bold" fill="#222"><text x="553" y="85">RÉPUBLIQUE</text><text x="553" y="93.2">FRANÇAISE</text></g>
<g font-size="3.6" font-style="italic" fill="#444"><text x="553" y="100">Liberté</text><text x="553" y="104.5">Égalité</text><text x="553" y="109">Fraternité</text></g>
<rect x="606.7" y="66.3" width="35.5" height="45.5" fill="#fff" stroke="#3a6fb7" stroke-width="1"/>
<text x="624.5" y="75" text-anchor="middle" font-size="6.6" font-weight="bold" fill="#e1000f" letter-spacing=".6">ADEME</text>
<circle cx="624.4" cy="86.9" r="8.4" fill="#2f58a6"/><path d="M621 82c2-1 4 0 3 2s-3 2-2 4 3 1 2 4" stroke="#9db9e6" stroke-width="1.2" fill="none"/>
<g font-size="2.9" font-weight="bold" fill="#e1000f" text-anchor="middle" letter-spacing=".3"><text x="624.5" y="101.3">AGENCE DE LA</text><text x="624.5" y="104.9">TRANSITION</text><text x="624.5" y="108.5">ÉCOLOGIQUE</text></g>
<path d="M169.3 135.7H660.7V258.5H169.3ZM172.4 139.0V188.7H289.4V139.0ZM172.4 194.3V253.3H289.4V194.3ZM294.6 139.0V188.7H411.6V139.0ZM294.6 194.3V253.3H411.6V194.3ZM416.8 139.0V188.7H532.7V139.0ZM416.8 194.3V253.3H532.7V194.3ZM538.5 139.0V188.7H656.0V139.0ZM538.5 194.3V253.3H656.0V194.3Z" fill="#dadada" fill-rule="evenodd"/>
<rect x="173.15" y="139.75" width="115.49999999999997" height="48.19999999999999" fill="none" stroke="#ebebeb" stroke-width="1.5"/>
<rect x="173.15" y="195.05" width="115.49999999999997" height="57.5" fill="none" stroke="#ebebeb" stroke-width="1.5"/>
<rect x="295.35" y="139.75" width="115.5" height="48.19999999999999" fill="none" stroke="#ebebeb" stroke-width="1.5"/>
<rect x="295.35" y="195.05" width="115.5" height="57.5" fill="none" stroke="#ebebeb" stroke-width="1.5"/>
<rect x="417.55" y="139.75" width="114.40000000000003" height="48.19999999999999" fill="none" stroke="#ebebeb" stroke-width="1.5"/>
<rect x="417.55" y="195.05" width="114.40000000000003" height="57.5" fill="none" stroke="#ebebeb" stroke-width="1.5"/>
<rect x="539.25" y="139.75" width="116.0" height="48.19999999999999" fill="none" stroke="#ebebeb" stroke-width="1.5"/>
<rect x="539.25" y="195.05" width="116.0" height="57.5" fill="none" stroke="#ebebeb" stroke-width="1.5"/>
<text x="231.39999999999998" y="174.6" text-anchor="middle" font-size="31" fill="#000">J</text>
<text x="353.6" y="174.6" text-anchor="middle" font-size="31" fill="#000" word-spacing="6">J + <tspan font-weight="normal">1</tspan></text>
<text x="475.25" y="174.6" text-anchor="middle" font-size="31" fill="#000" word-spacing="6">J + <tspan font-weight="bold">2</tspan></text>
<text x="597.75" y="174.6" text-anchor="middle" font-size="31" fill="#000" word-spacing="6">J + <tspan font-weight="bold">3</tspan></text>
<rect x="175.1" y="194.4" width="114.6" height="57.4" fill="#fff" fill-opacity=".55"/>
<use href="#wave" x="180.1" y="194.9" width="105.6" height="54.9"/>
<rect x="296.8" y="195.8" width="115.1" height="57.8" fill="#fff" fill-opacity=".55"/>
<use href="#wave" x="301.8" y="196.3" width="106.1" height="55.3"/>
<rect x="419.0" y="195.8" width="115.0" height="57.8" fill="#fff" fill-opacity=".55"/>
<use href="#wave" x="424.0" y="196.3" width="106.0" height="55.3"/>
<rect x="539.1" y="195.8" width="115.1" height="57.8" fill="#fff" fill-opacity=".55"/>
<use href="#wave" x="544.1" y="196.3" width="106.1" height="55.3"/>
<rect x="2417.0" y="816.0" width="11" height="505.5" fill="url(#shR)"/>
<rect x="171.0" y="1320.5" width="2247.0" height="9" fill="url(#shB)"/>
<rect x="168.0" y="815.0" width="2249.0" height="505.5" fill="#fff"/>
<rect x="168.0" y="1269.95" width="2249.0" height="50.55" fill="#f0f0f0"/>
<rect x="168.0" y="1168.85" width="2249.0" height="50.55" fill="#f0f0f0"/>
<rect x="168.0" y="1067.75" width="2249.0" height="50.55" fill="#f0f0f0"/>
<rect x="168.0" y="966.65" width="2249.0" height="50.55" fill="#f0f0f0"/>
<rect x="168.0" y="865.55" width="2249.0" height="50.55" fill="#f0f0f0"/>
<rect x="168.00" y="815.0" width="321.15" height="505.5" fill="#f0f0f0"/>
<rect x="810.30" y="815.0" width="321.15" height="505.5" fill="#f0f0f0"/>
<rect x="1452.60" y="815.0" width="321.15" height="505.5" fill="#f0f0f0"/>
<rect x="2094.90" y="815.0" width="321.15" height="505.5" fill="#f0f0f0"/>
<path d="M168.0 1270.5H2417.0M168.0 1219.5H2417.0M168.0 1169.5H2417.0M168.0 1118.5H2417.0M168.0 1068.5H2417.0M168.0 1017.5H2417.0M168.0 967.5H2417.0M168.0 916.5H2417.0M168.0 866.5H2417.0M168.0 815.5H2417.0" stroke="#bbb" stroke-width="1" fill="none"/>
<path d="M489.5 1270.0V1219.4M489.5 1168.8V1118.3M489.5 1067.8V1017.2M489.5 966.7V916.1M489.5 865.5V815.0M810.5 1270.0V1219.4M810.5 1168.8V1118.3M810.5 1067.8V1017.2M810.5 966.7V916.1M810.5 865.5V815.0M1131.5 1270.0V1219.4M1131.5 1168.8V1118.3M1131.5 1067.8V1017.2M1131.5 966.7V916.1M1131.5 865.5V815.0M1453.5 1270.0V1219.4M1453.5 1168.8V1118.3M1453.5 1067.8V1017.2M1453.5 966.7V916.1M1453.5 865.5V815.0M1774.5 1270.0V1219.4M1774.5 1168.8V1118.3M1774.5 1067.8V1017.2M1774.5 966.7V916.1M1774.5 865.5V815.0M2095.5 1270.0V1219.4M2095.5 1168.8V1118.3M2095.5 1067.8V1017.2M2095.5 966.7V916.1M2095.5 865.5V815.0M2416.5 1270.0V1219.4M2416.5 1168.8V1118.3M2416.5 1067.8V1017.2M2416.5 966.7V916.1M2416.5 865.5V815.0" stroke="#cbcbcb" stroke-width="1" fill="none"/>
<path d="M168.50 1320.5V1300.3H168.80V1320.5ZM168.80 1320.5V1300.3H170.19V1320.5ZM170.19 1320.5V1300.3H171.59V1320.5ZM171.59 1320.5V1305.3H172.98V1320.5ZM172.98 1320.5V1300.3H174.38V1320.5ZM174.38 1320.5V1300.3H175.77V1320.5ZM175.77 1320.5V1300.3H177.16V1320.5ZM177.16 1320.5V1300.3H178.56V1320.5ZM178.56 1320.5V1300.3H179.96V1320.5ZM179.96 1320.5V1300.3H181.35V1320.5ZM181.35 1320.5V1305.3H182.75V1320.5ZM182.75 1320.5V1300.3H184.14V1320.5ZM184.14 1320.5V1290.2H185.53V1320.5ZM185.53 1320.5V1300.3H186.93V1320.5ZM186.93 1320.5V1295.2H188.32V1320.5ZM188.32 1320.5V1295.2H189.72V1320.5ZM189.72 1320.5V1295.2H191.12V1320.5ZM191.12 1320.5V1295.2H192.51V1320.5ZM192.51 1320.5V1285.1H193.91V1320.5ZM193.91 1320.5V1295.2H195.30V1320.5ZM195.30 1320.5V1305.3H196.69V1320.5ZM196.69 1320.5V1300.3H198.09V1320.5ZM198.09 1320.5V1295.2H199.49V1320.5ZM199.49 1320.5V1295.2H200.88V1320.5ZM200.88 1320.5V1310.4H202.28V1320.5ZM202.28 1320.5V1310.4H203.67V1320.5ZM203.67 1320.5V1310.4H205.06V1320.5ZM205.06 1320.5V1310.4H206.46V1320.5ZM206.46 1320.5V1305.3H207.85V1320.5ZM207.85 1320.5V1305.3H209.25V1320.5ZM209.25 1320.5V1305.3H210.65V1320.5ZM210.65 1320.5V1305.3H212.04V1320.5ZM212.04 1320.5V1300.3H213.44V1320.5ZM213.44 1320.5V1300.3H214.83V1320.5ZM214.83 1320.5V1305.3H216.22V1320.5ZM216.22 1320.5V1300.3H217.62V1320.5ZM217.62 1320.5V1300.3H219.02V1320.5ZM219.02 1320.5V1310.4H220.41V1320.5ZM220.41 1320.5V1300.3H221.81V1320.5ZM221.81 1320.5V1310.4H223.20V1320.5ZM223.20 1320.5V1300.3H224.59V1320.5ZM224.59 1320.5V1305.3H225.99V1320.5ZM225.99 1320.5V1285.1H227.38V1320.5ZM227.38 1320.5V1285.1H228.78V1320.5ZM228.78 1320.5V1300.3H230.18V1320.5ZM230.18 1320.5V1295.2H231.57V1320.5ZM231.57 1320.5V1295.2H232.97V1320.5ZM232.97 1320.5V1300.3H234.36V1320.5ZM234.36 1320.5V1295.2H235.75V1320.5ZM235.75 1320.5V1295.2H237.15V1320.5ZM237.15 1320.5V1285.1H238.55V1320.5ZM238.55 1320.5V1295.2H239.94V1320.5ZM239.94 1320.5V1295.2H241.34V1320.5ZM241.34 1320.5V1295.2H242.73V1320.5ZM242.73 1320.5V1295.2H244.12V1320.5ZM244.12 1320.5V1295.2H245.52V1320.5ZM245.52 1320.5V1295.2H246.91V1320.5ZM246.91 1320.5V1300.3H248.31V1320.5ZM397.57 1320.5V1285.1H398.97V1320.5ZM398.97 1320.5V1285.1H400.37V1320.5ZM400.37 1320.5V1285.1H401.76V1320.5ZM401.76 1320.5V1300.3H403.16V1320.5ZM403.16 1320.5V1290.2H404.55V1320.5ZM404.55 1320.5V1285.1H405.94V1320.5ZM405.94 1320.5V1295.2H407.34V1320.5ZM407.34 1320.5V1305.3H408.74V1320.5ZM408.74 1320.5V1290.2H410.13V1320.5ZM410.13 1320.5V1285.1H411.52V1320.5ZM411.52 1320.5V1305.3H412.92V1320.5ZM412.92 1320.5V1300.3H414.31V1320.5ZM414.31 1320.5V1290.2H415.71V1320.5ZM415.71 1320.5V1290.2H417.11V1320.5ZM417.11 1320.5V1290.2H418.50V1320.5ZM418.50 1320.5V1290.2H419.89V1320.5ZM419.89 1320.5V1295.2H421.29V1320.5ZM421.29 1320.5V1290.2H422.69V1320.5ZM422.69 1320.5V1305.3H424.08V1320.5ZM424.08 1320.5V1305.3H425.48V1320.5ZM425.48 1320.5V1305.3H426.87V1320.5ZM426.87 1320.5V1290.2H428.26V1320.5ZM428.26 1320.5V1295.2H429.66V1320.5ZM429.66 1320.5V1290.2H431.06V1320.5ZM431.06 1320.5V1305.3H432.45V1320.5ZM432.45 1320.5V1295.2H433.85V1320.5ZM433.85 1320.5V1305.3H435.24V1320.5ZM435.24 1320.5V1295.2H436.63V1320.5ZM436.63 1320.5V1300.3H438.03V1320.5ZM438.03 1320.5V1300.3H439.43V1320.5ZM439.43 1320.5V1295.2H440.82V1320.5ZM440.82 1320.5V1300.3H442.22V1320.5ZM442.22 1320.5V1295.2H443.61V1320.5ZM443.61 1320.5V1300.3H445.00V1320.5ZM445.00 1320.5V1295.2H446.40V1320.5ZM446.40 1320.5V1295.2H447.80V1320.5ZM447.80 1320.5V1300.3H449.19V1320.5ZM449.19 1320.5V1300.3H450.58V1320.5ZM450.58 1320.5V1290.2H451.98V1320.5ZM451.98 1320.5V1295.2H453.38V1320.5ZM453.38 1320.5V1295.2H454.77V1320.5ZM454.77 1320.5V1295.2H456.17V1320.5ZM456.17 1320.5V1295.2H457.56V1320.5ZM457.56 1320.5V1300.3H458.95V1320.5ZM458.95 1320.5V1295.2H460.35V1320.5ZM460.35 1320.5V1290.2H461.75V1320.5ZM461.75 1320.5V1300.3H463.14V1320.5ZM463.14 1320.5V1290.2H464.54V1320.5ZM464.54 1320.5V1295.2H465.93V1320.5ZM465.93 1320.5V1290.2H467.32V1320.5ZM467.32 1320.5V1300.3H468.72V1320.5ZM468.72 1320.5V1300.3H470.12V1320.5ZM470.12 1320.5V1300.3H471.51V1320.5ZM471.51 1320.5V1290.2H472.91V1320.5ZM472.91 1320.5V1290.2H474.30V1320.5ZM474.30 1320.5V1300.3H475.69V1320.5ZM475.69 1320.5V1290.2H477.09V1320.5ZM477.09 1320.5V1280.1H478.49V1320.5ZM478.49 1320.5V1290.2H479.88V1320.5ZM479.88 1320.5V1295.2H481.28V1320.5ZM481.28 1320.5V1290.2H482.67V1320.5ZM482.67 1320.5V1290.2H484.06V1320.5ZM484.06 1320.5V1290.2H485.46V1320.5ZM485.46 1320.5V1295.2H486.86V1320.5ZM486.86 1320.5V1300.3H488.25V1320.5ZM488.25 1320.5V1295.2H489.64V1320.5ZM489.64 1320.5V1290.2H491.04V1320.5ZM491.04 1320.5V1290.2H492.44V1320.5ZM492.44 1320.5V1290.2H493.83V1320.5ZM493.83 1320.5V1295.2H495.23V1320.5ZM495.23 1320.5V1290.2H496.62V1320.5ZM496.62 1320.5V1305.3H498.01V1320.5ZM498.01 1320.5V1290.2H499.41V1320.5ZM499.41 1320.5V1295.2H500.81V1320.5ZM500.81 1320.5V1300.3H502.20V1320.5ZM502.20 1320.5V1290.2H503.60V1320.5ZM503.60 1320.5V1290.2H504.99V1320.5ZM504.99 1320.5V1290.2H506.38V1320.5ZM506.38 1320.5V1290.2H507.78V1320.5ZM507.78 1320.5V1305.3H509.18V1320.5ZM509.18 1320.5V1300.3H510.57V1320.5ZM510.57 1320.5V1285.1H511.97V1320.5ZM511.97 1320.5V1300.3H513.36V1320.5ZM513.36 1320.5V1305.3H514.75V1320.5ZM514.75 1320.5V1290.2H516.15V1320.5ZM516.15 1320.5V1290.2H517.54V1320.5ZM517.54 1320.5V1290.2H518.94V1320.5ZM518.94 1320.5V1305.3H520.34V1320.5ZM520.34 1320.5V1295.2H521.73V1320.5ZM521.73 1320.5V1290.2H523.12V1320.5ZM523.12 1320.5V1290.2H524.52V1320.5ZM524.52 1320.5V1295.2H525.91V1320.5ZM525.91 1320.5V1290.2H527.31V1320.5ZM527.31 1320.5V1280.1H528.71V1320.5ZM528.71 1320.5V1285.1H530.10V1320.5ZM530.10 1320.5V1295.2H531.50V1320.5ZM531.50 1320.5V1295.2H532.89V1320.5ZM532.89 1320.5V1290.2H534.28V1320.5ZM534.28 1320.5V1285.1H535.68V1320.5ZM535.68 1320.5V1290.2H537.08V1320.5ZM537.08 1320.5V1290.2H538.47V1320.5ZM538.47 1320.5V1300.3H539.87V1320.5ZM539.87 1320.5V1290.2H541.26V1320.5ZM541.26 1320.5V1300.3H542.65V1320.5ZM542.65 1320.5V1305.3H544.05V1320.5ZM544.05 1320.5V1295.2H545.45V1320.5ZM545.45 1320.5V1300.3H546.84V1320.5ZM546.84 1320.5V1290.2H548.24V1320.5ZM548.24 1320.5V1290.2H549.63V1320.5ZM549.63 1320.5V1290.2H551.02V1320.5ZM551.02 1320.5V1290.2H552.42V1320.5ZM552.42 1320.5V1290.2H553.82V1320.5ZM553.82 1320.5V1305.3H555.21V1320.5ZM555.21 1320.5V1300.3H556.61V1320.5ZM556.61 1320.5V1290.2H558.00V1320.5ZM558.00 1320.5V1290.2H559.39V1320.5ZM559.39 1320.5V1290.2H560.79V1320.5ZM560.79 1320.5V1290.2H562.19V1320.5ZM562.19 1320.5V1290.2H563.58V1320.5ZM563.58 1320.5V1290.2H564.98V1320.5ZM564.98 1320.5V1290.2H566.37V1320.5ZM566.37 1320.5V1290.2H567.76V1320.5ZM567.76 1320.5V1280.1H569.16V1320.5ZM569.16 1320.5V1305.3H570.56V1320.5ZM570.56 1320.5V1290.2H571.95V1320.5ZM571.95 1320.5V1290.2H573.35V1320.5ZM573.35 1320.5V1305.3H574.74V1320.5ZM574.74 1320.5V1290.2H576.13V1320.5ZM576.13 1320.5V1290.2H577.53V1320.5ZM577.53 1320.5V1290.2H578.92V1320.5ZM578.92 1320.5V1290.2H580.32V1320.5ZM580.32 1320.5V1300.3H581.72V1320.5ZM581.72 1320.5V1290.2H583.11V1320.5ZM583.11 1320.5V1290.2H584.50V1320.5ZM584.50 1320.5V1305.3H585.90V1320.5ZM585.90 1320.5V1295.2H587.29V1320.5ZM587.29 1320.5V1305.3H588.69V1320.5ZM588.69 1320.5V1290.2H590.09V1320.5ZM590.09 1320.5V1305.3H591.48V1320.5ZM591.48 1320.5V1290.2H592.88V1320.5ZM592.88 1320.5V1305.3H594.27V1320.5ZM594.27 1320.5V1305.3H595.66V1320.5ZM595.66 1320.5V1300.3H597.06V1320.5ZM597.06 1320.5V1305.3H598.46V1320.5ZM598.46 1320.5V1290.2H599.85V1320.5ZM599.85 1320.5V1285.1H601.25V1320.5ZM601.25 1320.5V1295.2H602.64V1320.5ZM602.64 1320.5V1305.3H604.03V1320.5ZM604.03 1320.5V1300.3H605.43V1320.5ZM605.43 1320.5V1290.2H606.83V1320.5ZM606.83 1320.5V1305.3H608.22V1320.5ZM608.22 1320.5V1290.2H609.62V1320.5ZM609.62 1320.5V1290.2H611.01V1320.5ZM611.01 1320.5V1295.2H612.40V1320.5ZM612.40 1320.5V1295.2H613.80V1320.5ZM613.80 1320.5V1300.3H615.20V1320.5ZM615.20 1320.5V1295.2H616.59V1320.5ZM616.59 1320.5V1295.2H617.99V1320.5ZM617.99 1320.5V1295.2H619.38V1320.5ZM619.38 1320.5V1300.3H620.77V1320.5ZM620.77 1320.5V1300.3H622.17V1320.5ZM622.17 1320.5V1295.2H623.57V1320.5ZM623.57 1320.5V1305.3H624.96V1320.5ZM624.96 1320.5V1300.3H626.36V1320.5ZM626.36 1320.5V1295.2H627.75V1320.5ZM627.75 1320.5V1305.3H629.14V1320.5ZM629.14 1320.5V1285.1H630.54V1320.5ZM630.54 1320.5V1300.3H631.94V1320.5ZM631.94 1320.5V1290.2H633.33V1320.5ZM633.33 1320.5V1295.2H634.73V1320.5ZM634.73 1320.5V1300.3H636.12V1320.5ZM636.12 1320.5V1305.3H637.51V1320.5ZM637.51 1320.5V1295.2H638.91V1320.5ZM638.91 1320.5V1305.3H640.31V1320.5ZM640.31 1320.5V1295.2H641.70V1320.5ZM641.70 1320.5V1305.3H643.10V1320.5ZM643.10 1320.5V1300.3H644.49V1320.5ZM644.49 1320.5V1295.2H645.88V1320.5ZM645.88 1320.5V1305.3H647.28V1320.5ZM647.28 1320.5V1300.3H648.67V1320.5ZM648.67 1320.5V1295.2H650.07V1320.5ZM650.07 1320.5V1305.3H651.47V1320.5ZM651.47 1320.5V1300.3H652.86V1320.5ZM652.86 1320.5V1295.2H654.25V1320.5ZM654.25 1320.5V1300.3H655.65V1320.5ZM655.65 1320.5V1300.3H657.04V1320.5ZM657.04 1320.5V1295.2H658.44V1320.5ZM658.44 1320.5V1295.2H659.84V1320.5ZM659.84 1320.5V1295.2H661.23V1320.5ZM661.23 1320.5V1290.2H662.62V1320.5ZM662.62 1320.5V1295.2H664.02V1320.5ZM664.02 1320.5V1305.3H665.41V1320.5ZM665.41 1320.5V1305.3H666.81V1320.5ZM666.81 1320.5V1300.3H668.21V1320.5ZM668.21 1320.5V1295.2H669.60V1320.5ZM669.60 1320.5V1300.3H671.00V1320.5ZM671.00 1320.5V1305.3H672.39V1320.5ZM672.39 1320.5V1295.2H673.78V1320.5ZM673.78 1320.5V1295.2H675.18V1320.5ZM675.18 1320.5V1305.3H676.58V1320.5ZM676.58 1320.5V1295.2H677.97V1320.5ZM677.97 1320.5V1305.3H679.37V1320.5ZM679.37 1320.5V1300.3H680.76V1320.5ZM680.76 1320.5V1295.2H682.15V1320.5ZM682.15 1320.5V1305.3H683.55V1320.5ZM683.55 1320.5V1295.2H684.95V1320.5ZM684.95 1320.5V1300.3H686.34V1320.5ZM686.34 1320.5V1295.2H687.74V1320.5ZM687.74 1320.5V1295.2H689.13V1320.5ZM689.13 1320.5V1300.3H690.52V1320.5ZM690.52 1320.5V1305.3H691.92V1320.5ZM691.92 1320.5V1295.2H693.32V1320.5ZM693.32 1320.5V1300.3H694.71V1320.5ZM694.71 1320.5V1305.3H696.11V1320.5ZM696.11 1320.5V1295.2H697.50V1320.5ZM697.50 1320.5V1300.3H698.89V1320.5ZM698.89 1320.5V1295.2H700.29V1320.5ZM700.29 1320.5V1305.3H701.69V1320.5ZM701.69 1320.5V1300.3H703.08V1320.5ZM703.08 1320.5V1295.2H704.48V1320.5ZM704.48 1320.5V1295.2H705.87V1320.5ZM705.87 1320.5V1300.3H707.26V1320.5ZM707.26 1320.5V1300.3H708.66V1320.5ZM708.66 1320.5V1295.2H710.06V1320.5ZM710.06 1320.5V1295.2H711.45V1320.5ZM711.45 1320.5V1305.3H712.85V1320.5ZM712.85 1320.5V1290.2H714.24V1320.5ZM714.24 1320.5V1295.2H715.63V1320.5ZM715.63 1320.5V1295.2H717.03V1320.5ZM717.03 1320.5V1285.1H718.42V1320.5ZM718.42 1320.5V1305.3H719.82V1320.5ZM719.82 1320.5V1300.3H721.22V1320.5ZM721.22 1320.5V1295.2H722.61V1320.5ZM722.61 1320.5V1305.3H724.00V1320.5ZM724.00 1320.5V1285.1H725.40V1320.5ZM725.40 1320.5V1300.3H726.79V1320.5ZM726.79 1320.5V1295.2H728.19V1320.5ZM728.19 1320.5V1295.2H729.59V1320.5ZM729.59 1320.5V1295.2H730.98V1320.5ZM730.98 1320.5V1300.3H732.38V1320.5ZM732.38 1320.5V1295.2H733.77V1320.5ZM733.77 1320.5V1285.1H735.16V1320.5ZM735.16 1320.5V1300.3H736.56V1320.5ZM736.56 1320.5V1305.3H737.96V1320.5ZM737.96 1320.5V1295.2H739.35V1320.5ZM739.35 1320.5V1305.3H740.75V1320.5ZM740.75 1320.5V1305.3H742.14V1320.5ZM742.14 1320.5V1295.2H743.53V1320.5ZM743.53 1320.5V1295.2H744.93V1320.5ZM744.93 1320.5V1295.2H746.33V1320.5ZM746.33 1320.5V1305.3H747.72V1320.5ZM747.72 1320.5V1300.3H749.12V1320.5ZM749.12 1320.5V1295.2H750.51V1320.5ZM750.51 1320.5V1305.3H751.90V1320.5ZM751.90 1320.5V1290.2H753.30V1320.5ZM753.30 1320.5V1305.3H754.70V1320.5ZM754.70 1320.5V1295.2H756.09V1320.5ZM756.09 1320.5V1305.3H757.49V1320.5ZM757.49 1320.5V1295.2H758.88V1320.5ZM758.88 1320.5V1295.2H760.27V1320.5ZM760.27 1320.5V1295.2H761.67V1320.5ZM761.67 1320.5V1295.2H763.07V1320.5ZM763.07 1320.5V1285.1H764.46V1320.5ZM764.46 1320.5V1305.3H765.86V1320.5ZM765.86 1320.5V1295.2H767.25V1320.5ZM767.25 1320.5V1295.2H768.64V1320.5ZM768.64 1320.5V1295.2H770.04V1320.5ZM770.04 1320.5V1295.2H771.44V1320.5ZM771.44 1320.5V1295.2H772.83V1320.5ZM772.83 1320.5V1295.2H774.23V1320.5ZM774.23 1320.5V1305.3H775.62V1320.5ZM775.62 1320.5V1295.2H777.01V1320.5ZM777.01 1320.5V1300.3H778.41V1320.5ZM778.41 1320.5V1295.2H779.81V1320.5ZM779.81 1320.5V1305.3H781.20V1320.5ZM781.20 1320.5V1300.3H782.60V1320.5ZM782.60 1320.5V1295.2H783.99V1320.5ZM783.99 1320.5V1300.3H785.38V1320.5ZM785.38 1320.5V1305.3H786.78V1320.5ZM786.78 1320.5V1295.2H788.17V1320.5ZM788.17 1320.5V1295.2H789.57V1320.5ZM789.57 1320.5V1295.2H790.97V1320.5ZM790.97 1320.5V1300.3H792.36V1320.5ZM792.36 1320.5V1305.3H793.75V1320.5ZM793.75 1320.5V1295.2H795.15V1320.5ZM795.15 1320.5V1290.2H796.54V1320.5ZM796.54 1320.5V1295.2H797.94V1320.5ZM797.94 1320.5V1305.3H799.34V1320.5ZM799.34 1320.5V1295.2H800.73V1320.5ZM800.73 1320.5V1295.2H802.12V1320.5ZM802.12 1320.5V1290.2H803.52V1320.5ZM803.52 1320.5V1285.1H804.91V1320.5ZM804.91 1320.5V1295.2H806.31V1320.5ZM806.31 1320.5V1295.2H807.71V1320.5ZM807.71 1320.5V1295.2H809.10V1320.5ZM809.10 1320.5V1305.3H810.50V1320.5ZM810.50 1320.5V1290.2H811.89V1320.5ZM811.89 1320.5V1290.2H813.28V1320.5ZM813.28 1320.5V1295.2H814.68V1320.5ZM814.68 1320.5V1300.3H816.08V1320.5ZM816.08 1320.5V1285.1H817.47V1320.5ZM817.47 1320.5V1300.3H818.87V1320.5ZM818.87 1320.5V1290.2H820.26V1320.5ZM820.26 1320.5V1300.3H821.65V1320.5ZM821.65 1320.5V1290.2H823.05V1320.5ZM823.05 1320.5V1300.3H824.45V1320.5ZM824.45 1320.5V1295.2H825.84V1320.5ZM825.84 1320.5V1300.3H827.24V1320.5ZM827.24 1320.5V1280.1H828.63V1320.5ZM828.63 1320.5V1290.2H830.02V1320.5ZM830.02 1320.5V1290.2H831.42V1320.5ZM831.42 1320.5V1290.2H832.82V1320.5ZM832.82 1320.5V1290.2H834.21V1320.5ZM834.21 1320.5V1290.2H835.61V1320.5ZM835.61 1320.5V1290.2H837.00V1320.5ZM837.00 1320.5V1300.3H838.39V1320.5ZM838.39 1320.5V1290.2H839.79V1320.5ZM839.79 1320.5V1290.2H841.19V1320.5ZM841.19 1320.5V1290.2H842.58V1320.5ZM842.58 1320.5V1300.3H843.98V1320.5ZM843.98 1320.5V1280.1H845.37V1320.5ZM845.37 1320.5V1295.2H846.76V1320.5ZM846.76 1320.5V1290.2H848.16V1320.5ZM848.16 1320.5V1290.2H849.56V1320.5ZM849.56 1320.5V1295.2H850.95V1320.5ZM850.95 1320.5V1295.2H852.35V1320.5ZM852.35 1320.5V1290.2H853.74V1320.5ZM853.74 1320.5V1300.3H855.13V1320.5ZM855.13 1320.5V1285.1H856.53V1320.5ZM856.53 1320.5V1300.3H857.92V1320.5ZM857.92 1320.5V1295.2H859.32V1320.5ZM859.32 1320.5V1290.2H860.72V1320.5ZM860.72 1320.5V1290.2H862.11V1320.5ZM862.11 1320.5V1300.3H863.50V1320.5ZM863.50 1320.5V1285.1H864.90V1320.5ZM864.90 1320.5V1290.2H866.29V1320.5ZM866.29 1320.5V1290.2H867.69V1320.5ZM867.69 1320.5V1295.2H869.09V1320.5ZM869.09 1320.5V1290.2H870.48V1320.5ZM870.48 1320.5V1295.2H871.88V1320.5ZM871.88 1320.5V1290.2H873.27V1320.5ZM873.27 1320.5V1290.2H874.66V1320.5ZM874.66 1320.5V1300.3H876.06V1320.5ZM876.06 1320.5V1290.2H877.46V1320.5ZM877.46 1320.5V1290.2H878.85V1320.5ZM878.85 1320.5V1290.2H880.25V1320.5ZM880.25 1320.5V1295.2H881.64V1320.5ZM881.64 1320.5V1300.3H883.03V1320.5ZM883.03 1320.5V1295.2H884.43V1320.5ZM884.43 1320.5V1300.3H885.83V1320.5ZM885.83 1320.5V1285.1H887.22V1320.5ZM887.22 1320.5V1300.3H888.62V1320.5ZM888.62 1320.5V1290.2H890.01V1320.5ZM890.01 1320.5V1290.2H891.40V1320.5ZM891.40 1320.5V1295.2H892.80V1320.5ZM892.80 1320.5V1290.2H894.20V1320.5ZM894.20 1320.5V1290.2H895.59V1320.5ZM895.59 1320.5V1295.2H896.99V1320.5ZM896.99 1320.5V1300.3H898.38V1320.5ZM898.38 1320.5V1290.2H899.77V1320.5ZM899.77 1320.5V1295.2H901.17V1320.5ZM901.17 1320.5V1295.2H902.57V1320.5ZM902.57 1320.5V1305.3H903.96V1320.5ZM903.96 1320.5V1295.2H905.36V1320.5ZM905.36 1320.5V1285.1H906.75V1320.5ZM906.75 1320.5V1295.2H908.14V1320.5ZM908.14 1320.5V1300.3H909.54V1320.5ZM909.54 1320.5V1295.2H910.94V1320.5ZM910.94 1320.5V1295.2H912.33V1320.5ZM912.33 1320.5V1300.3H913.73V1320.5ZM913.73 1320.5V1305.3H915.12V1320.5ZM915.12 1320.5V1295.2H916.51V1320.5ZM916.51 1320.5V1290.2H917.91V1320.5ZM917.91 1320.5V1300.3H919.31V1320.5ZM919.31 1320.5V1300.3H920.70V1320.5ZM920.70 1320.5V1295.2H922.10V1320.5ZM922.10 1320.5V1295.2H923.49V1320.5ZM923.49 1320.5V1305.3H924.88V1320.5ZM924.88 1320.5V1300.3H926.28V1320.5ZM926.28 1320.5V1305.3H927.68V1320.5ZM927.68 1320.5V1295.2H929.07V1320.5ZM929.07 1320.5V1295.2H930.47V1320.5ZM930.47 1320.5V1305.3H931.86V1320.5ZM931.86 1320.5V1290.2H933.25V1320.5ZM933.25 1320.5V1295.2H934.65V1320.5ZM934.65 1320.5V1295.2H936.04V1320.5ZM936.04 1320.5V1295.2H937.44V1320.5ZM937.44 1320.5V1295.2H938.84V1320.5ZM938.84 1320.5V1290.2H940.23V1320.5ZM940.23 1320.5V1290.2H941.62V1320.5ZM941.62 1320.5V1305.3H943.02V1320.5ZM943.02 1320.5V1290.2H944.41V1320.5ZM944.41 1320.5V1295.2H945.81V1320.5ZM945.81 1320.5V1300.3H947.21V1320.5ZM947.21 1320.5V1295.2H948.60V1320.5ZM948.60 1320.5V1295.2H950.00V1320.5ZM950.00 1320.5V1295.2H951.39V1320.5ZM951.39 1320.5V1295.2H952.78V1320.5ZM952.78 1320.5V1300.3H954.18V1320.5ZM954.18 1320.5V1295.2H955.58V1320.5ZM955.58 1320.5V1300.3H956.97V1320.5ZM956.97 1320.5V1290.2H958.37V1320.5ZM958.37 1320.5V1290.2H959.76V1320.5ZM959.76 1320.5V1295.2H961.15V1320.5ZM961.15 1320.5V1295.2H962.55V1320.5ZM962.55 1320.5V1305.3H963.95V1320.5ZM963.95 1320.5V1290.2H965.34V1320.5ZM965.34 1320.5V1300.3H966.74V1320.5ZM966.74 1320.5V1295.2H968.13V1320.5ZM968.13 1320.5V1300.3H969.52V1320.5ZM969.52 1320.5V1295.2H970.92V1320.5ZM970.92 1320.5V1295.2H972.32V1320.5ZM972.32 1320.5V1295.2H973.71V1320.5ZM973.71 1320.5V1295.2H975.11V1320.5ZM975.11 1320.5V1300.3H976.50V1320.5ZM976.50 1320.5V1295.2H977.89V1320.5ZM977.89 1320.5V1295.2H979.29V1320.5ZM979.29 1320.5V1295.2H980.69V1320.5ZM980.69 1320.5V1305.3H982.08V1320.5ZM982.08 1320.5V1295.2H983.48V1320.5ZM983.48 1320.5V1300.3H984.87V1320.5ZM984.87 1320.5V1300.3H986.26V1320.5ZM986.26 1320.5V1285.1H987.66V1320.5ZM987.66 1320.5V1295.2H989.06V1320.5ZM989.06 1320.5V1300.3H990.45V1320.5ZM990.45 1320.5V1300.3H991.85V1320.5ZM991.85 1320.5V1300.3H993.24V1320.5ZM993.24 1320.5V1300.3H994.63V1320.5ZM994.63 1320.5V1300.3H996.03V1320.5ZM996.03 1320.5V1295.2H997.43V1320.5ZM997.43 1320.5V1295.2H998.82V1320.5ZM998.82 1320.5V1295.2H1000.22V1320.5ZM1000.22 1320.5V1305.3H1001.61V1320.5ZM1001.61 1320.5V1300.3H1003.00V1320.5ZM1003.00 1320.5V1295.2H1004.40V1320.5ZM1004.40 1320.5V1290.2H1005.79V1320.5ZM1005.79 1320.5V1300.3H1007.19V1320.5ZM1007.19 1320.5V1290.2H1008.59V1320.5ZM1008.59 1320.5V1305.3H1009.98V1320.5ZM1009.98 1320.5V1305.3H1011.38V1320.5ZM1011.38 1320.5V1295.2H1012.77V1320.5ZM1012.77 1320.5V1300.3H1014.16V1320.5ZM1014.16 1320.5V1295.2H1015.56V1320.5ZM1015.56 1320.5V1295.2H1016.96V1320.5ZM1016.96 1320.5V1300.3H1018.35V1320.5ZM1018.35 1320.5V1295.2H1019.75V1320.5ZM1019.75 1320.5V1295.2H1021.14V1320.5ZM1021.14 1320.5V1295.2H1022.53V1320.5ZM1022.53 1320.5V1285.1H1023.93V1320.5ZM1023.93 1320.5V1295.2H1025.33V1320.5ZM1025.33 1320.5V1300.3H1026.72V1320.5ZM1026.72 1320.5V1295.2H1028.12V1320.5ZM1028.12 1320.5V1305.3H1029.51V1320.5ZM1029.51 1320.5V1295.2H1030.90V1320.5ZM1030.90 1320.5V1290.2H1032.30V1320.5ZM1032.30 1320.5V1295.2H1033.69V1320.5ZM1033.69 1320.5V1305.3H1035.09V1320.5ZM1035.09 1320.5V1295.2H1036.48V1320.5ZM1036.48 1320.5V1300.3H1037.88V1320.5ZM1037.88 1320.5V1295.2H1039.28V1320.5ZM1039.28 1320.5V1295.2H1040.67V1320.5ZM1040.67 1320.5V1295.2H1042.07V1320.5ZM1042.07 1320.5V1295.2H1043.46V1320.5ZM1043.46 1320.5V1290.2H1044.86V1320.5ZM1044.86 1320.5V1290.2H1046.25V1320.5ZM1046.25 1320.5V1290.2H1047.64V1320.5ZM1047.64 1320.5V1305.3H1049.04V1320.5ZM1049.04 1320.5V1300.3H1050.43V1320.5ZM1050.43 1320.5V1305.3H1051.83V1320.5ZM1051.83 1320.5V1290.2H1053.22V1320.5ZM1053.22 1320.5V1295.2H1054.62V1320.5ZM1054.62 1320.5V1295.2H1056.02V1320.5ZM1056.02 1320.5V1295.2H1057.41V1320.5ZM1057.41 1320.5V1305.3H1058.81V1320.5ZM1058.81 1320.5V1295.2H1060.20V1320.5ZM1060.20 1320.5V1290.2H1061.60V1320.5ZM1061.60 1320.5V1290.2H1062.99V1320.5ZM1062.99 1320.5V1290.2H1064.38V1320.5ZM1064.38 1320.5V1290.2H1065.78V1320.5ZM1065.78 1320.5V1290.2H1067.17V1320.5ZM1067.17 1320.5V1290.2H1068.57V1320.5ZM1068.57 1320.5V1290.2H1069.96V1320.5ZM1069.96 1320.5V1290.2H1071.36V1320.5ZM1071.36 1320.5V1290.2H1072.76V1320.5ZM1072.76 1320.5V1290.2H1074.15V1320.5ZM1074.15 1320.5V1290.2H1075.55V1320.5ZM1075.55 1320.5V1290.2H1076.94V1320.5ZM1076.94 1320.5V1290.2H1078.34V1320.5ZM1078.34 1320.5V1290.2H1079.73V1320.5ZM1079.73 1320.5V1290.2H1081.12V1320.5ZM1081.12 1320.5V1290.2H1082.52V1320.5ZM1082.52 1320.5V1285.1H1083.91V1320.5ZM1083.91 1320.5V1290.2H1085.31V1320.5ZM1085.31 1320.5V1290.2H1086.70V1320.5ZM1086.70 1320.5V1290.2H1088.10V1320.5ZM1088.10 1320.5V1290.2H1089.50V1320.5ZM1089.50 1320.5V1290.2H1090.89V1320.5ZM1090.89 1320.5V1290.2H1092.29V1320.5ZM1092.29 1320.5V1290.2H1093.68V1320.5ZM1093.68 1320.5V1290.2H1095.08V1320.5ZM1095.08 1320.5V1290.2H1096.47V1320.5ZM1096.47 1320.5V1290.2H1097.87V1320.5ZM1097.87 1320.5V1295.2H1099.26V1320.5ZM1099.26 1320.5V1290.2H1100.65V1320.5ZM1100.65 1320.5V1290.2H1102.05V1320.5ZM1102.05 1320.5V1290.2H1103.44V1320.5ZM1103.44 1320.5V1290.2H1104.84V1320.5ZM1104.84 1320.5V1285.1H1106.24V1320.5ZM1106.24 1320.5V1290.2H1107.63V1320.5ZM1107.63 1320.5V1290.2H1109.03V1320.5ZM1109.03 1320.5V1290.2H1110.42V1320.5ZM1110.42 1320.5V1290.2H1111.82V1320.5ZM1111.82 1320.5V1290.2H1113.21V1320.5ZM1113.21 1320.5V1290.2H1114.61V1320.5ZM1114.61 1320.5V1285.1H1116.00V1320.5ZM1116.00 1320.5V1290.2H1117.39V1320.5ZM1117.39 1320.5V1290.2H1118.79V1320.5ZM1118.79 1320.5V1290.2H1120.18V1320.5ZM1120.18 1320.5V1290.2H1121.58V1320.5ZM1121.58 1320.5V1290.2H1122.97V1320.5ZM1122.97 1320.5V1295.2H1124.37V1320.5ZM1124.37 1320.5V1290.2H1125.77V1320.5ZM1125.77 1320.5V1290.2H1127.16V1320.5ZM1127.16 1320.5V1290.2H1128.56V1320.5ZM1128.56 1320.5V1290.2H1129.95V1320.5ZM1129.95 1320.5V1290.2H1131.35V1320.5ZM1131.35 1320.5V1290.2H1132.74V1320.5ZM1132.74 1320.5V1290.2H1134.13V1320.5ZM1134.13 1320.5V1290.2H1135.53V1320.5ZM1135.53 1320.5V1290.2H1136.92V1320.5ZM1136.92 1320.5V1295.2H1138.32V1320.5ZM1138.32 1320.5V1290.2H1139.71V1320.5ZM1139.71 1320.5V1290.2H1141.11V1320.5ZM1141.11 1320.5V1290.2H1142.51V1320.5ZM1142.51 1320.5V1290.2H1143.90V1320.5ZM1143.90 1320.5V1290.2H1145.30V1320.5ZM1145.30 1320.5V1290.2H1146.69V1320.5ZM1146.69 1320.5V1290.2H1148.09V1320.5ZM1148.09 1320.5V1290.2H1149.48V1320.5ZM1149.48 1320.5V1290.2H1150.88V1320.5ZM1150.88 1320.5V1290.2H1152.27V1320.5ZM1152.27 1320.5V1290.2H1153.66V1320.5ZM1153.66 1320.5V1290.2H1155.06V1320.5ZM1155.06 1320.5V1290.2H1156.45V1320.5ZM1156.45 1320.5V1290.2H1157.85V1320.5ZM1157.85 1320.5V1290.2H1159.25V1320.5ZM1159.25 1320.5V1290.2H1160.64V1320.5ZM1160.64 1320.5V1290.2H1162.04V1320.5ZM1162.04 1320.5V1290.2H1163.43V1320.5ZM1163.43 1320.5V1290.2H1164.83V1320.5ZM1164.83 1320.5V1285.1H1166.22V1320.5ZM1166.22 1320.5V1290.2H1167.62V1320.5ZM1167.62 1320.5V1290.2H1169.01V1320.5ZM1169.01 1320.5V1290.2H1170.40V1320.5ZM1170.40 1320.5V1290.2H1171.80V1320.5ZM1171.80 1320.5V1290.2H1173.19V1320.5ZM1173.19 1320.5V1290.2H1174.59V1320.5ZM1174.59 1320.5V1295.2H1175.99V1320.5ZM1175.99 1320.5V1290.2H1177.38V1320.5ZM1177.38 1320.5V1290.2H1178.78V1320.5ZM1178.78 1320.5V1290.2H1180.17V1320.5ZM1180.17 1320.5V1290.2H1181.57V1320.5ZM1181.57 1320.5V1290.2H1182.96V1320.5ZM1182.96 1320.5V1290.2H1184.36V1320.5ZM1184.36 1320.5V1290.2H1185.75V1320.5ZM1185.75 1320.5V1290.2H1187.14V1320.5ZM1187.14 1320.5V1290.2H1188.54V1320.5ZM1188.54 1320.5V1270.0H1189.93V1320.5ZM1189.93 1320.5V1275.0H1191.33V1320.5ZM1191.33 1320.5V1275.0H1192.72V1320.5ZM1192.72 1320.5V1280.1H1194.12V1320.5ZM1194.12 1320.5V1280.1H1195.52V1320.5ZM1195.52 1320.5V1280.1H1196.91V1320.5ZM1196.91 1320.5V1280.1H1198.31V1320.5ZM1198.31 1320.5V1275.0H1199.70V1320.5ZM1199.70 1320.5V1280.1H1201.10V1320.5ZM1201.10 1320.5V1280.1H1202.49V1320.5ZM1202.49 1320.5V1280.1H1203.88V1320.5ZM1203.88 1320.5V1280.1H1205.28V1320.5ZM1205.28 1320.5V1264.9H1206.67V1320.5ZM1206.67 1320.5V1280.1H1208.07V1320.5ZM1208.07 1320.5V1275.0H1209.46V1320.5ZM1209.46 1320.5V1275.0H1210.86V1320.5ZM1210.86 1320.5V1275.0H1212.26V1320.5ZM1361.52 1320.5V1285.1H1362.91V1320.5ZM1362.91 1320.5V1285.1H1364.31V1320.5ZM1364.31 1320.5V1275.0H1365.70V1320.5ZM1365.70 1320.5V1275.0H1367.10V1320.5ZM1367.10 1320.5V1264.9H1368.50V1320.5ZM1368.50 1320.5V1275.0H1369.89V1320.5ZM1369.89 1320.5V1275.0H1371.29V1320.5ZM1371.29 1320.5V1275.0H1372.68V1320.5ZM1372.68 1320.5V1300.3H1374.08V1320.5ZM1374.08 1320.5V1305.3H1375.47V1320.5ZM1375.47 1320.5V1305.3H1376.87V1320.5ZM1376.87 1320.5V1305.3H1378.26V1320.5ZM1378.26 1320.5V1305.3H1379.65V1320.5ZM1379.65 1320.5V1305.3H1381.05V1320.5ZM1381.05 1320.5V1305.3H1382.44V1320.5ZM1382.44 1320.5V1310.4H1383.84V1320.5ZM1383.84 1320.5V1310.4H1385.24V1320.5ZM1385.24 1320.5V1310.4H1386.63V1320.5ZM1386.63 1320.5V1310.4H1388.03V1320.5ZM1388.03 1320.5V1310.4H1389.42V1320.5ZM1389.42 1320.5V1305.3H1390.82V1320.5ZM1390.82 1320.5V1310.4H1392.21V1320.5ZM1392.21 1320.5V1310.4H1393.61V1320.5ZM1393.61 1320.5V1310.4H1395.00V1320.5ZM1395.00 1320.5V1310.4H1396.39V1320.5ZM1396.39 1320.5V1310.4H1397.79V1320.5ZM1397.79 1320.5V1310.4H1399.18V1320.5ZM1399.18 1320.5V1310.4H1400.58V1320.5ZM1400.58 1320.5V1310.4H1401.97V1320.5ZM1401.97 1320.5V1310.4H1403.37V1320.5ZM1403.37 1320.5V1310.4H1404.77V1320.5ZM1404.77 1320.5V1310.4H1406.16V1320.5ZM1406.16 1320.5V1305.3H1407.56V1320.5ZM1407.56 1320.5V1300.3H1408.95V1320.5ZM1408.95 1320.5V1305.3H1410.35V1320.5ZM1410.35 1320.5V1300.3H1411.74V1320.5ZM1411.74 1320.5V1300.3H1413.13V1320.5ZM1413.13 1320.5V1305.3H1414.53V1320.5ZM1414.53 1320.5V1300.3H1415.92V1320.5ZM1415.92 1320.5V1300.3H1417.32V1320.5ZM1417.32 1320.5V1305.3H1418.71V1320.5ZM1418.71 1320.5V1300.3H1420.11V1320.5ZM1420.11 1320.5V1300.3H1421.51V1320.5ZM1421.51 1320.5V1300.3H1422.90V1320.5ZM1422.90 1320.5V1305.3H1424.30V1320.5ZM1424.30 1320.5V1300.3H1425.69V1320.5ZM1425.69 1320.5V1305.3H1427.09V1320.5ZM1427.09 1320.5V1300.3H1428.48V1320.5ZM1428.48 1320.5V1300.3H1429.88V1320.5ZM1429.88 1320.5V1300.3H1431.27V1320.5ZM1431.27 1320.5V1300.3H1432.66V1320.5ZM1432.66 1320.5V1300.3H1434.06V1320.5ZM1434.06 1320.5V1305.3H1435.45V1320.5ZM1435.45 1320.5V1300.3H1436.85V1320.5ZM1436.85 1320.5V1300.3H1438.25V1320.5ZM1438.25 1320.5V1300.3H1439.64V1320.5ZM1439.64 1320.5V1305.3H1441.04V1320.5ZM1441.04 1320.5V1305.3H1442.43V1320.5ZM1442.43 1320.5V1305.3H1443.83V1320.5ZM1443.83 1320.5V1300.3H1445.22V1320.5ZM1445.22 1320.5V1295.2H1446.62V1320.5ZM1446.62 1320.5V1300.3H1448.01V1320.5ZM1448.01 1320.5V1300.3H1449.40V1320.5ZM1449.40 1320.5V1300.3H1450.80V1320.5ZM1450.80 1320.5V1305.3H1452.19V1320.5ZM1452.19 1320.5V1305.3H1453.59V1320.5ZM1453.59 1320.5V1300.3H1454.99V1320.5ZM1454.99 1320.5V1300.3H1456.38V1320.5ZM1456.38 1320.5V1300.3H1457.78V1320.5ZM1457.78 1320.5V1300.3H1459.17V1320.5ZM1459.17 1320.5V1305.3H1460.57V1320.5ZM1460.57 1320.5V1295.2H1461.96V1320.5ZM1461.96 1320.5V1305.3H1463.36V1320.5ZM1463.36 1320.5V1300.3H1464.75V1320.5ZM1464.75 1320.5V1305.3H1466.14V1320.5ZM1466.14 1320.5V1300.3H1467.54V1320.5ZM1467.54 1320.5V1305.3H1468.93V1320.5ZM1468.93 1320.5V1290.2H1470.33V1320.5ZM1470.33 1320.5V1305.3H1471.72V1320.5ZM1471.72 1320.5V1300.3H1473.12V1320.5ZM1473.12 1320.5V1305.3H1474.52V1320.5ZM1474.52 1320.5V1305.3H1475.91V1320.5ZM1475.91 1320.5V1300.3H1477.31V1320.5ZM1477.31 1320.5V1300.3H1478.70V1320.5ZM1478.70 1320.5V1305.3H1480.10V1320.5ZM1480.10 1320.5V1300.3H1481.49V1320.5ZM1481.49 1320.5V1300.3H1482.88V1320.5ZM1482.88 1320.5V1300.3H1484.28V1320.5ZM1484.28 1320.5V1305.3H1485.67V1320.5ZM1485.67 1320.5V1305.3H1487.07V1320.5ZM1487.07 1320.5V1305.3H1488.46V1320.5ZM1488.46 1320.5V1290.2H1489.86V1320.5ZM1489.86 1320.5V1300.3H1491.26V1320.5ZM1491.26 1320.5V1300.3H1492.65V1320.5ZM1492.65 1320.5V1305.3H1494.05V1320.5ZM1494.05 1320.5V1300.3H1495.44V1320.5ZM1495.44 1320.5V1300.3H1496.84V1320.5ZM1496.84 1320.5V1300.3H1498.23V1320.5ZM1498.23 1320.5V1305.3H1499.62V1320.5ZM1499.62 1320.5V1300.3H1501.02V1320.5ZM1501.02 1320.5V1305.3H1502.41V1320.5ZM1502.41 1320.5V1300.3H1503.81V1320.5ZM1503.81 1320.5V1300.3H1505.20V1320.5ZM1505.20 1320.5V1290.2H1506.60V1320.5ZM1506.60 1320.5V1290.2H1508.00V1320.5ZM1508.00 1320.5V1290.2H1509.39V1320.5ZM1509.39 1320.5V1290.2H1510.79V1320.5ZM1510.79 1320.5V1290.2H1512.18V1320.5ZM1512.18 1320.5V1285.1H1513.58V1320.5ZM1513.58 1320.5V1290.2H1514.97V1320.5ZM1514.97 1320.5V1290.2H1516.37V1320.5ZM1516.37 1320.5V1290.2H1517.76V1320.5ZM1517.76 1320.5V1295.2H1519.15V1320.5ZM1519.15 1320.5V1295.2H1520.55V1320.5ZM1520.55 1320.5V1295.2H1521.94V1320.5ZM1521.94 1320.5V1295.2H1523.34V1320.5ZM1523.34 1320.5V1295.2H1524.74V1320.5ZM1524.74 1320.5V1295.2H1526.13V1320.5ZM1526.13 1320.5V1295.2H1527.53V1320.5ZM1527.53 1320.5V1295.2H1528.92V1320.5ZM1528.92 1320.5V1295.2H1530.32V1320.5ZM1530.32 1320.5V1295.2H1531.71V1320.5ZM1531.71 1320.5V1295.2H1533.11V1320.5ZM1682.37 1320.5V1280.1H1683.77V1320.5ZM1683.77 1320.5V1259.8H1685.16V1320.5ZM1685.16 1320.5V1259.8H1686.56V1320.5ZM1686.56 1320.5V1259.8H1687.95V1320.5ZM1687.95 1320.5V1259.8H1689.35V1320.5ZM1689.35 1320.5V1280.1H1690.74V1320.5ZM1690.74 1320.5V1209.3H1692.13V1320.5ZM1692.13 1320.5V1234.6H1693.53V1320.5ZM1693.53 1320.5V1249.7H1694.92V1320.5ZM1694.92 1320.5V1280.1H1696.32V1320.5ZM1696.32 1320.5V1280.1H1697.71V1320.5ZM1697.71 1320.5V1280.1H1699.11V1320.5ZM1699.11 1320.5V1285.1H1700.51V1320.5ZM1700.51 1320.5V1295.2H1701.90V1320.5ZM1701.90 1320.5V1290.2H1703.30V1320.5ZM1703.30 1320.5V1285.1H1704.69V1320.5ZM1704.69 1320.5V1295.2H1706.09V1320.5ZM1706.09 1320.5V1300.3H1707.48V1320.5ZM1707.48 1320.5V1300.3H1708.88V1320.5ZM1708.88 1320.5V1300.3H1710.27V1320.5ZM1710.27 1320.5V1285.1H1711.66V1320.5ZM1711.66 1320.5V1300.3H1713.06V1320.5ZM1713.06 1320.5V1290.2H1714.45V1320.5ZM1714.45 1320.5V1300.3H1715.85V1320.5ZM1715.85 1320.5V1275.0H1717.25V1320.5ZM1717.25 1320.5V1290.2H1718.64V1320.5ZM1718.64 1320.5V1295.2H1720.04V1320.5ZM1720.04 1320.5V1280.1H1721.43V1320.5ZM1721.43 1320.5V1285.1H1722.83V1320.5ZM1722.83 1320.5V1285.1H1724.22V1320.5ZM1724.22 1320.5V1285.1H1725.62V1320.5ZM1725.62 1320.5V1285.1H1727.01V1320.5ZM1727.01 1320.5V1285.1H1728.40V1320.5ZM1728.40 1320.5V1300.3H1729.80V1320.5ZM1729.80 1320.5V1300.3H1731.19V1320.5ZM1731.19 1320.5V1285.1H1732.59V1320.5ZM1732.59 1320.5V1275.0H1733.99V1320.5ZM1733.99 1320.5V1300.3H1735.38V1320.5ZM1735.38 1320.5V1285.1H1736.78V1320.5ZM1736.78 1320.5V1300.3H1738.17V1320.5ZM1738.17 1320.5V1285.1H1739.57V1320.5ZM1739.57 1320.5V1280.1H1740.96V1320.5ZM1740.96 1320.5V1285.1H1742.36V1320.5ZM1742.36 1320.5V1285.1H1743.75V1320.5ZM1743.75 1320.5V1285.1H1745.14V1320.5ZM1745.14 1320.5V1300.3H1746.54V1320.5ZM1746.54 1320.5V1285.1H1747.93V1320.5ZM1747.93 1320.5V1290.2H1749.33V1320.5ZM1749.33 1320.5V1285.1H1750.72V1320.5ZM1750.72 1320.5V1285.1H1752.12V1320.5ZM1752.12 1320.5V1295.2H1753.52V1320.5ZM1753.52 1320.5V1300.3H1754.91V1320.5ZM1754.91 1320.5V1285.1H1756.31V1320.5ZM1756.31 1320.5V1295.2H1757.70V1320.5ZM1757.70 1320.5V1285.1H1759.10V1320.5ZM1759.10 1320.5V1280.1H1760.49V1320.5ZM1760.49 1320.5V1285.1H1761.88V1320.5ZM1761.88 1320.5V1285.1H1763.28V1320.5ZM1763.28 1320.5V1285.1H1764.67V1320.5ZM1764.67 1320.5V1285.1H1766.07V1320.5ZM1766.07 1320.5V1290.2H1767.46V1320.5ZM1767.46 1320.5V1290.2H1768.86V1320.5ZM1768.86 1320.5V1285.1H1770.26V1320.5ZM1770.26 1320.5V1300.3H1771.65V1320.5ZM1771.65 1320.5V1285.1H1773.05V1320.5ZM1773.05 1320.5V1300.3H1774.44V1320.5ZM1774.44 1320.5V1285.1H1775.84V1320.5ZM1775.84 1320.5V1285.1H1777.23V1320.5ZM1777.23 1320.5V1300.3H1778.62V1320.5ZM1778.62 1320.5V1285.1H1780.02V1320.5ZM1780.02 1320.5V1300.3H1781.41V1320.5ZM1781.41 1320.5V1285.1H1782.81V1320.5ZM1782.81 1320.5V1285.1H1784.20V1320.5ZM1784.20 1320.5V1290.2H1785.60V1320.5ZM1785.60 1320.5V1285.1H1787.00V1320.5ZM1787.00 1320.5V1285.1H1788.39V1320.5ZM1788.39 1320.5V1285.1H1789.79V1320.5ZM1789.79 1320.5V1300.3H1791.18V1320.5ZM1791.18 1320.5V1300.3H1792.58V1320.5ZM1792.58 1320.5V1285.1H1793.97V1320.5ZM1793.97 1320.5V1285.1H1795.37V1320.5ZM1795.37 1320.5V1280.1H1796.76V1320.5ZM1796.76 1320.5V1295.2H1798.15V1320.5ZM1798.15 1320.5V1295.2H1799.55V1320.5ZM1799.55 1320.5V1295.2H1800.94V1320.5ZM1800.94 1320.5V1285.1H1802.34V1320.5ZM1802.34 1320.5V1285.1H1803.74V1320.5ZM1803.74 1320.5V1295.2H1805.13V1320.5ZM1805.13 1320.5V1285.1H1806.53V1320.5ZM1806.53 1320.5V1290.2H1807.92V1320.5ZM1807.92 1320.5V1285.1H1809.32V1320.5ZM1809.32 1320.5V1295.2H1810.71V1320.5ZM1810.71 1320.5V1285.1H1812.11V1320.5ZM1812.11 1320.5V1290.2H1813.50V1320.5ZM1813.50 1320.5V1285.1H1814.89V1320.5ZM1814.89 1320.5V1300.3H1816.29V1320.5ZM1816.29 1320.5V1300.3H1817.68V1320.5ZM1817.68 1320.5V1285.1H1819.08V1320.5ZM1819.08 1320.5V1285.1H1820.48V1320.5ZM1820.48 1320.5V1285.1H1821.87V1320.5ZM1821.87 1320.5V1275.0H1823.27V1320.5ZM1823.27 1320.5V1285.1H1824.66V1320.5ZM1824.66 1320.5V1280.1H1826.06V1320.5ZM1826.06 1320.5V1290.2H1827.45V1320.5ZM1827.45 1320.5V1285.1H1828.85V1320.5ZM1828.85 1320.5V1270.0H1830.24V1320.5ZM1830.24 1320.5V1280.1H1831.63V1320.5ZM1831.63 1320.5V1285.1H1833.03V1320.5ZM1833.03 1320.5V1280.1H1834.42V1320.5ZM1834.42 1320.5V1280.1H1835.82V1320.5ZM1835.82 1320.5V1280.1H1837.21V1320.5ZM1837.21 1320.5V1290.2H1838.61V1320.5ZM1838.61 1320.5V1285.1H1840.01V1320.5ZM1840.01 1320.5V1270.0H1841.40V1320.5ZM1841.40 1320.5V1275.0H1842.80V1320.5ZM1842.80 1320.5V1275.0H1844.19V1320.5ZM1844.19 1320.5V1275.0H1845.59V1320.5ZM1845.59 1320.5V1280.1H1846.98V1320.5ZM1846.98 1320.5V1280.1H1848.38V1320.5ZM1848.38 1320.5V1285.1H1849.77V1320.5ZM1849.77 1320.5V1280.1H1851.16V1320.5ZM1851.16 1320.5V1275.0H1852.56V1320.5ZM1852.56 1320.5V1285.1H1853.95V1320.5ZM1853.95 1320.5V1275.0H1855.35V1320.5ZM2003.22 1320.5V1270.0H2004.62V1320.5ZM2004.62 1320.5V1270.0H2006.01V1320.5ZM2006.01 1320.5V1275.0H2007.40V1320.5ZM2007.40 1320.5V1280.1H2008.80V1320.5ZM2008.80 1320.5V1280.1H2010.19V1320.5ZM2010.19 1320.5V1285.1H2011.59V1320.5ZM2011.59 1320.5V1285.1H2012.99V1320.5ZM2012.99 1320.5V1285.1H2014.38V1320.5ZM2014.38 1320.5V1300.3H2015.78V1320.5ZM2015.78 1320.5V1285.1H2017.17V1320.5ZM2017.17 1320.5V1300.3H2018.57V1320.5ZM2018.57 1320.5V1290.2H2019.96V1320.5ZM2019.96 1320.5V1285.1H2021.36V1320.5ZM2021.36 1320.5V1295.2H2022.75V1320.5ZM2022.75 1320.5V1290.2H2024.14V1320.5ZM2024.14 1320.5V1290.2H2025.54V1320.5ZM2025.54 1320.5V1300.3H2026.93V1320.5ZM2026.93 1320.5V1290.2H2028.33V1320.5ZM2028.33 1320.5V1290.2H2029.73V1320.5ZM2029.73 1320.5V1300.3H2031.12V1320.5ZM2031.12 1320.5V1295.2H2032.52V1320.5ZM2032.52 1320.5V1290.2H2033.91V1320.5ZM2033.91 1320.5V1295.2H2035.31V1320.5ZM2035.31 1320.5V1300.3H2036.70V1320.5ZM2036.70 1320.5V1290.2H2038.10V1320.5ZM2038.10 1320.5V1290.2H2039.49V1320.5ZM2039.49 1320.5V1305.3H2040.88V1320.5ZM2040.88 1320.5V1295.2H2042.28V1320.5ZM2042.28 1320.5V1300.3H2043.67V1320.5ZM2043.67 1320.5V1285.1H2045.07V1320.5ZM2045.07 1320.5V1285.1H2046.46V1320.5ZM2046.46 1320.5V1295.2H2047.86V1320.5ZM2047.86 1320.5V1280.1H2049.26V1320.5ZM2049.26 1320.5V1280.1H2050.65V1320.5ZM2050.65 1320.5V1300.3H2052.05V1320.5ZM2052.05 1320.5V1280.1H2053.44V1320.5ZM2053.44 1320.5V1280.1H2054.84V1320.5ZM2054.84 1320.5V1285.1H2056.23V1320.5ZM2056.23 1320.5V1300.3H2057.62V1320.5ZM2057.62 1320.5V1280.1H2059.02V1320.5ZM2059.02 1320.5V1280.1H2060.41V1320.5ZM2060.41 1320.5V1280.1H2061.81V1320.5ZM2061.81 1320.5V1280.1H2063.20V1320.5ZM2063.20 1320.5V1295.2H2064.60V1320.5ZM2064.60 1320.5V1285.1H2065.99V1320.5ZM2065.99 1320.5V1285.1H2067.39V1320.5ZM2067.39 1320.5V1290.2H2068.78V1320.5ZM2068.78 1320.5V1285.1H2070.18V1320.5ZM2070.18 1320.5V1285.1H2071.57V1320.5ZM2071.57 1320.5V1280.1H2072.97V1320.5ZM2072.97 1320.5V1300.3H2074.37V1320.5ZM2074.37 1320.5V1285.1H2075.76V1320.5ZM2075.76 1320.5V1285.1H2077.16V1320.5ZM2077.16 1320.5V1285.1H2078.55V1320.5ZM2078.55 1320.5V1285.1H2079.95V1320.5ZM2079.95 1320.5V1280.1H2081.34V1320.5ZM2081.34 1320.5V1300.3H2082.74V1320.5ZM2082.74 1320.5V1280.1H2084.13V1320.5ZM2084.13 1320.5V1300.3H2085.53V1320.5ZM2085.53 1320.5V1285.1H2086.92V1320.5ZM2086.92 1320.5V1285.1H2088.32V1320.5ZM2088.32 1320.5V1280.1H2089.71V1320.5ZM2089.71 1320.5V1295.2H2091.11V1320.5ZM2091.11 1320.5V1280.1H2092.50V1320.5ZM2092.50 1320.5V1280.1H2093.89V1320.5ZM2093.89 1320.5V1280.1H2095.29V1320.5ZM2095.29 1320.5V1295.2H2096.68V1320.5ZM2096.68 1320.5V1285.1H2098.08V1320.5ZM2098.08 1320.5V1300.3H2099.47V1320.5ZM2099.47 1320.5V1280.1H2100.87V1320.5ZM2100.87 1320.5V1290.2H2102.26V1320.5ZM2102.26 1320.5V1290.2H2103.66V1320.5ZM2103.66 1320.5V1300.3H2105.05V1320.5ZM2105.05 1320.5V1280.1H2106.45V1320.5ZM2106.45 1320.5V1280.1H2107.84V1320.5ZM2107.84 1320.5V1300.3H2109.24V1320.5ZM2109.24 1320.5V1280.1H2110.64V1320.5ZM2110.64 1320.5V1295.2H2112.03V1320.5ZM2112.03 1320.5V1280.1H2113.43V1320.5ZM2113.43 1320.5V1290.2H2114.82V1320.5ZM2114.82 1320.5V1280.1H2116.22V1320.5ZM2116.22 1320.5V1280.1H2117.61V1320.5ZM2117.61 1320.5V1305.3H2119.01V1320.5ZM2119.01 1320.5V1285.1H2120.40V1320.5ZM2120.40 1320.5V1295.2H2121.80V1320.5ZM2121.80 1320.5V1280.1H2123.19V1320.5ZM2123.19 1320.5V1300.3H2124.59V1320.5ZM2124.59 1320.5V1280.1H2125.98V1320.5ZM2125.98 1320.5V1300.3H2127.38V1320.5ZM2127.38 1320.5V1280.1H2128.77V1320.5ZM2128.77 1320.5V1290.2H2130.16V1320.5ZM2130.16 1320.5V1290.2H2131.56V1320.5ZM2131.56 1320.5V1300.3H2132.95V1320.5ZM2132.95 1320.5V1280.1H2134.35V1320.5ZM2134.35 1320.5V1280.1H2135.74V1320.5ZM2135.74 1320.5V1305.3H2137.14V1320.5ZM2137.14 1320.5V1275.0H2138.53V1320.5ZM2138.53 1320.5V1290.2H2139.93V1320.5ZM2139.93 1320.5V1290.2H2141.32V1320.5ZM2141.32 1320.5V1300.3H2142.72V1320.5ZM2142.72 1320.5V1280.1H2144.12V1320.5ZM2144.12 1320.5V1285.1H2145.51V1320.5ZM2145.51 1320.5V1295.2H2146.91V1320.5ZM2146.91 1320.5V1290.2H2148.30V1320.5ZM2148.30 1320.5V1275.0H2149.70V1320.5ZM2149.70 1320.5V1275.0H2151.09V1320.5ZM2151.09 1320.5V1285.1H2152.49V1320.5ZM2152.49 1320.5V1270.0H2153.88V1320.5ZM2153.88 1320.5V1295.2H2155.28V1320.5ZM2155.28 1320.5V1264.9H2156.67V1320.5ZM2156.67 1320.5V1270.0H2158.07V1320.5ZM2158.07 1320.5V1285.1H2159.46V1320.5ZM2159.46 1320.5V1285.1H2160.86V1320.5ZM2160.86 1320.5V1280.1H2162.25V1320.5ZM2162.25 1320.5V1285.1H2163.64V1320.5ZM2163.64 1320.5V1295.2H2165.04V1320.5ZM2165.04 1320.5V1275.0H2166.43V1320.5ZM2166.43 1320.5V1275.0H2167.83V1320.5ZM2167.83 1320.5V1295.2H2169.22V1320.5ZM2169.22 1320.5V1280.1H2170.62V1320.5ZM2170.62 1320.5V1290.2H2172.01V1320.5ZM2172.01 1320.5V1264.9H2173.41V1320.5ZM2173.41 1320.5V1239.6H2174.80V1320.5ZM2174.80 1320.5V1249.7H2176.20V1320.5Z" fill="#9fecc3"/>
<path d="M248.31 1320.5V1295.2H249.71V1320.5ZM249.71 1320.5V1295.2H251.10V1320.5ZM251.10 1320.5V1290.2H252.50V1320.5ZM252.50 1320.5V1295.2H253.89V1320.5ZM253.89 1320.5V1295.2H255.28V1320.5ZM255.28 1320.5V1295.2H256.68V1320.5ZM256.68 1320.5V1295.2H258.07V1320.5ZM258.07 1320.5V1249.7H259.47V1320.5ZM259.47 1320.5V1163.8H260.87V1320.5ZM260.87 1320.5V1103.1H262.26V1320.5ZM262.26 1320.5V997.0H263.66V1320.5ZM263.66 1320.5V835.2H265.05V1320.5ZM265.05 1320.5V971.7H266.44V1320.5ZM266.44 1320.5V1148.6H267.84V1320.5ZM267.84 1320.5V1224.5H269.24V1320.5ZM269.24 1320.5V1239.3H270.63V1320.5ZM270.63 1320.5V1027.3H272.02V1320.5ZM272.02 1320.5V981.8H273.42V1320.5ZM273.42 1320.5V1017.2H274.81V1320.5ZM274.81 1320.5V1118.3H276.21V1320.5ZM276.21 1320.5V1168.8H277.61V1320.5ZM277.61 1320.5V1184.0H279.00V1320.5ZM279.00 1320.5V1184.0H280.39V1320.5ZM280.39 1320.5V1158.7H281.79V1320.5ZM281.79 1320.5V1103.1H283.19V1320.5ZM283.19 1320.5V1202.4H284.58V1320.5ZM284.58 1320.5V1193.7H285.98V1320.5ZM285.98 1320.5V1128.4H287.37V1320.5ZM287.37 1320.5V1012.1H288.76V1320.5ZM288.76 1320.5V1172.5H290.16V1320.5ZM290.16 1320.5V1168.8H291.56V1320.5ZM291.56 1320.5V1168.8H292.95V1320.5ZM292.95 1320.5V976.8H294.35V1320.5ZM294.35 1320.5V1032.4H295.74V1320.5ZM295.74 1320.5V1214.3H297.13V1320.5ZM297.13 1320.5V1270.0H298.53V1320.5ZM298.53 1320.5V1113.2H299.93V1320.5ZM299.93 1320.5V1137.7H301.32V1320.5ZM301.32 1320.5V1171.6H302.72V1320.5ZM302.72 1320.5V1218.8H304.11V1320.5ZM304.11 1320.5V1224.9H305.50V1320.5ZM305.50 1320.5V1128.4H306.90V1320.5ZM306.90 1320.5V1167.8H308.30V1320.5ZM308.30 1320.5V1194.1H309.69V1320.5ZM309.69 1320.5V997.0H311.08V1320.5ZM311.08 1320.5V1067.8H312.48V1320.5ZM312.48 1320.5V1002.0H313.88V1320.5ZM313.88 1320.5V1088.0H315.27V1320.5ZM315.27 1320.5V1173.9H316.67V1320.5ZM316.67 1320.5V1225.0H318.06V1320.5ZM318.06 1320.5V1226.4H319.45V1320.5ZM319.45 1320.5V1270.0H320.85V1320.5ZM320.85 1320.5V1275.0H322.25V1320.5ZM322.25 1320.5V1194.1H323.64V1320.5ZM323.64 1320.5V1185.8H325.04V1320.5ZM325.04 1320.5V1218.6H326.43V1320.5ZM326.43 1320.5V1205.2H327.82V1320.5ZM327.82 1320.5V1188.4H329.22V1320.5ZM329.22 1320.5V1179.0H330.62V1320.5ZM330.62 1320.5V1189.1H332.01V1320.5ZM332.01 1320.5V1224.5H333.41V1320.5ZM333.41 1320.5V1280.1H334.80V1320.5ZM334.80 1320.5V1209.3H336.19V1320.5ZM336.19 1320.5V1234.6H337.59V1320.5ZM337.59 1320.5V1224.5H338.99V1320.5ZM338.99 1320.5V1189.1H340.38V1320.5ZM340.38 1320.5V1125.9H341.77V1320.5ZM341.77 1320.5V1062.7H343.17V1320.5ZM343.17 1320.5V926.2H344.56V1320.5ZM344.56 1320.5V1050.7H345.96V1320.5ZM345.96 1320.5V1022.3H347.36V1320.5ZM347.36 1320.5V1168.8H348.75V1320.5ZM348.75 1320.5V1234.6H350.14V1320.5ZM350.14 1320.5V1133.5H351.54V1320.5ZM351.54 1320.5V1117.9H352.94V1320.5ZM352.94 1320.5V1076.6H354.33V1320.5ZM354.33 1320.5V1133.1H355.73V1320.5ZM355.73 1320.5V1270.5H357.12V1320.5ZM357.12 1320.5V1168.8H358.51V1320.5ZM358.51 1320.5V1204.2H359.91V1320.5ZM359.91 1320.5V1212.0H361.31V1320.5ZM361.31 1320.5V1197.6H362.70V1320.5ZM362.70 1320.5V1244.6H364.10V1320.5ZM364.10 1320.5V1234.6H365.49V1320.5ZM365.49 1320.5V1280.1H366.88V1320.5ZM366.88 1320.5V1280.1H368.28V1320.5ZM368.28 1320.5V1285.1H369.68V1320.5ZM369.68 1320.5V1032.4H371.07V1320.5ZM371.07 1320.5V1219.4H372.47V1320.5ZM372.47 1320.5V1194.1H373.86V1320.5ZM373.86 1320.5V1072.8H375.25V1320.5ZM375.25 1320.5V1017.2H376.65V1320.5ZM376.65 1320.5V1110.0H378.05V1320.5ZM378.05 1320.5V1224.5H379.44V1320.5ZM379.44 1320.5V1229.5H380.83V1320.5ZM380.83 1320.5V1249.9H382.23V1320.5ZM382.23 1320.5V1189.1H383.62V1320.5ZM383.62 1320.5V1258.9H385.02V1320.5ZM385.02 1320.5V1242.1H386.42V1320.5ZM386.42 1320.5V1269.0H387.81V1320.5ZM387.81 1320.5V1285.1H389.20V1320.5ZM389.20 1320.5V1285.1H390.60V1320.5ZM390.60 1320.5V1285.1H392.00V1320.5ZM392.00 1320.5V1305.3H393.39V1320.5ZM393.39 1320.5V1290.2H394.79V1320.5ZM394.79 1320.5V1275.0H396.18V1320.5ZM396.18 1320.5V1280.1H397.57V1320.5ZM1212.26 1320.5V1275.0H1213.65V1320.5ZM1213.65 1320.5V1277.8H1215.05V1320.5ZM1215.05 1320.5V1280.1H1216.44V1320.5ZM1216.44 1320.5V1270.0H1217.84V1320.5ZM1217.84 1320.5V1229.5H1219.23V1320.5ZM1219.23 1320.5V1229.5H1220.62V1320.5ZM1220.62 1320.5V1229.5H1222.02V1320.5ZM1222.02 1320.5V1194.1H1223.41V1320.5ZM1223.41 1320.5V1072.8H1224.81V1320.5ZM1224.81 1320.5V1059.0H1226.20V1320.5ZM1226.20 1320.5V1041.2H1227.60V1320.5ZM1227.60 1320.5V1032.4H1229.00V1320.5ZM1229.00 1320.5V1143.6H1230.39V1320.5ZM1230.39 1320.5V1140.4H1231.79V1320.5ZM1231.79 1320.5V1110.9H1233.18V1320.5ZM1233.18 1320.5V890.8H1234.58V1320.5ZM1234.58 1320.5V1037.4H1235.97V1320.5ZM1235.97 1320.5V1189.1H1237.37V1320.5ZM1237.37 1320.5V1264.9H1238.76V1320.5ZM1238.76 1320.5V1204.2H1240.15V1320.5ZM1240.15 1320.5V1265.7H1241.55V1320.5ZM1241.55 1320.5V1262.1H1242.94V1320.5ZM1242.94 1320.5V1148.6H1244.34V1320.5ZM1244.34 1320.5V1077.9H1245.74V1320.5ZM1245.74 1320.5V1232.2H1247.13V1320.5ZM1247.13 1320.5V1138.5H1248.53V1320.5ZM1248.53 1320.5V1120.3H1249.92V1320.5ZM1249.92 1320.5V1093.0H1251.32V1320.5ZM1251.32 1320.5V1259.8H1252.71V1320.5ZM1252.71 1320.5V1266.6H1254.11V1320.5ZM1254.11 1320.5V1209.3H1255.50V1320.5ZM1255.50 1320.5V1118.3H1256.89V1320.5ZM1256.89 1320.5V1144.2H1258.29V1320.5ZM1258.29 1320.5V1128.4H1259.68V1320.5ZM1259.68 1320.5V1214.3H1261.08V1320.5ZM1261.08 1320.5V1236.9H1262.47V1320.5ZM1262.47 1320.5V1201.3H1263.87V1320.5ZM1263.87 1320.5V1234.2H1265.27V1320.5ZM1265.27 1320.5V1204.2H1266.66V1320.5ZM1266.66 1320.5V1184.0H1268.06V1320.5ZM1268.06 1320.5V1184.0H1269.45V1320.5ZM1269.45 1320.5V1222.6H1270.85V1320.5ZM1270.85 1320.5V1261.1H1272.24V1320.5ZM1272.24 1320.5V1234.6H1273.63V1320.5ZM1273.63 1320.5V1134.0H1275.03V1320.5ZM1275.03 1320.5V1022.3H1276.42V1320.5ZM1276.42 1320.5V1209.3H1277.82V1320.5ZM1277.82 1320.5V1194.1H1279.21V1320.5ZM1279.21 1320.5V1199.2H1280.61V1320.5ZM1280.61 1320.5V1209.3H1282.01V1320.5ZM1282.01 1320.5V1256.0H1283.40V1320.5ZM1283.40 1320.5V1214.3H1284.80V1320.5ZM1284.80 1320.5V1270.0H1286.19V1320.5ZM1286.19 1320.5V1258.1H1287.59V1320.5ZM1287.59 1320.5V1264.5H1288.98V1320.5ZM1288.98 1320.5V1128.4H1290.38V1320.5ZM1290.38 1320.5V1133.5H1291.77V1320.5ZM1291.77 1320.5V1234.6H1293.16V1320.5ZM1293.16 1320.5V1234.6H1294.56V1320.5ZM1294.56 1320.5V1244.7H1295.95V1320.5ZM1295.95 1320.5V1247.0H1297.35V1320.5ZM1297.35 1320.5V1249.7H1298.75V1320.5ZM1298.75 1320.5V1244.7H1300.14V1320.5ZM1300.14 1320.5V1280.1H1301.54V1320.5ZM1301.54 1320.5V1179.0H1302.93V1320.5ZM1302.93 1320.5V981.8H1304.33V1320.5ZM1304.33 1320.5V1173.9H1305.72V1320.5ZM1305.72 1320.5V1259.8H1307.12V1320.5ZM1307.12 1320.5V1259.8H1308.51V1320.5ZM1308.51 1320.5V1108.2H1309.90V1320.5ZM1309.90 1320.5V1109.3H1311.30V1320.5ZM1311.30 1320.5V1047.5H1312.69V1320.5ZM1312.69 1320.5V1032.4H1314.09V1320.5ZM1314.09 1320.5V1032.4H1315.49V1320.5ZM1315.49 1320.5V1027.3H1316.88V1320.5ZM1316.88 1320.5V1027.3H1318.28V1320.5ZM1318.28 1320.5V991.9H1319.67V1320.5ZM1319.67 1320.5V1133.5H1321.07V1320.5ZM1321.07 1320.5V1184.0H1322.46V1320.5ZM1322.46 1320.5V1205.2H1323.86V1320.5ZM1323.86 1320.5V1247.0H1325.25V1320.5ZM1325.25 1320.5V1258.5H1326.64V1320.5ZM1326.64 1320.5V1136.7H1328.04V1320.5ZM1328.04 1320.5V1027.3H1329.43V1320.5ZM1329.43 1320.5V1138.5H1330.83V1320.5ZM1330.83 1320.5V1280.1H1332.22V1320.5ZM1332.22 1320.5V1282.2H1333.62V1320.5ZM1333.62 1320.5V1280.1H1335.02V1320.5ZM1335.02 1320.5V1280.1H1336.41V1320.5ZM1336.41 1320.5V1305.3H1337.81V1320.5ZM1337.81 1320.5V1280.1H1339.20V1320.5ZM1339.20 1320.5V1273.2H1340.60V1320.5ZM1340.60 1320.5V1264.9H1341.99V1320.5ZM1341.99 1320.5V1280.1H1343.38V1320.5ZM1343.38 1320.5V1156.8H1344.78V1320.5ZM1344.78 1320.5V1113.2H1346.17V1320.5ZM1346.17 1320.5V1184.0H1347.57V1320.5ZM1347.57 1320.5V1224.5H1348.96V1320.5ZM1348.96 1320.5V1213.6H1350.36V1320.5ZM1350.36 1320.5V1239.8H1351.76V1320.5ZM1351.76 1320.5V1224.5H1353.15V1320.5ZM1353.15 1320.5V1239.6H1354.55V1320.5ZM1354.55 1320.5V1280.1H1355.94V1320.5ZM1355.94 1320.5V1275.0H1357.34V1320.5ZM1357.34 1320.5V1280.1H1358.73V1320.5ZM1358.73 1320.5V1295.2H1360.12V1320.5ZM1360.12 1320.5V1290.2H1361.52V1320.5ZM1533.11 1320.5V1280.1H1534.50V1320.5ZM1534.50 1320.5V1244.7H1535.89V1320.5ZM1535.89 1320.5V1214.3H1537.29V1320.5ZM1537.29 1320.5V1234.6H1538.68V1320.5ZM1538.68 1320.5V1234.6H1540.08V1320.5ZM1540.08 1320.5V1237.1H1541.47V1320.5ZM1541.47 1320.5V1234.6H1542.87V1320.5ZM1542.87 1320.5V1275.0H1544.27V1320.5ZM1544.27 1320.5V1062.7H1545.66V1320.5ZM1545.66 1320.5V1163.4H1547.06V1320.5ZM1547.06 1320.5V1219.4H1548.45V1320.5ZM1548.45 1320.5V1077.9H1549.85V1320.5ZM1549.85 1320.5V1062.7H1551.24V1320.5ZM1551.24 1320.5V1042.5H1552.63V1320.5ZM1552.63 1320.5V1032.4H1554.03V1320.5ZM1554.03 1320.5V1128.4H1555.42V1320.5ZM1555.42 1320.5V1067.8H1556.82V1320.5ZM1556.82 1320.5V976.8H1558.21V1320.5ZM1558.21 1320.5V981.8H1559.61V1320.5ZM1559.61 1320.5V1138.5H1561.01V1320.5ZM1561.01 1320.5V1042.5H1562.40V1320.5ZM1562.40 1320.5V1027.3H1563.80V1320.5ZM1563.80 1320.5V1123.7H1565.19V1320.5ZM1565.19 1320.5V1197.8H1566.59V1320.5ZM1566.59 1320.5V1214.3H1567.98V1320.5ZM1567.98 1320.5V1231.8H1569.38V1320.5ZM1569.38 1320.5V1042.5H1570.77V1320.5ZM1570.77 1320.5V1091.9H1572.16V1320.5ZM1572.16 1320.5V1153.7H1573.56V1320.5ZM1573.56 1320.5V1234.6H1574.95V1320.5ZM1574.95 1320.5V1032.4H1576.35V1320.5ZM1576.35 1320.5V976.8H1577.75V1320.5ZM1577.75 1320.5V1043.2H1579.14V1320.5ZM1579.14 1320.5V1168.8H1580.54V1320.5ZM1580.54 1320.5V1037.4H1581.93V1320.5ZM1581.93 1320.5V1075.2H1583.33V1320.5ZM1583.33 1320.5V1108.2H1584.72V1320.5ZM1584.72 1320.5V1072.8H1586.12V1320.5ZM1586.12 1320.5V976.8H1587.51V1320.5ZM1587.51 1320.5V1088.0H1588.90V1320.5ZM1588.90 1320.5V1088.0H1590.30V1320.5ZM1590.30 1320.5V1072.8H1591.69V1320.5ZM1591.69 1320.5V1189.1H1593.09V1320.5ZM1593.09 1320.5V1143.6H1594.49V1320.5ZM1594.49 1320.5V1163.8H1595.88V1320.5ZM1595.88 1320.5V1102.9H1597.28V1320.5ZM1597.28 1320.5V1007.1H1598.67V1320.5ZM1598.67 1320.5V1067.8H1600.07V1320.5ZM1600.07 1320.5V1199.2H1601.46V1320.5ZM1601.46 1320.5V1236.3H1602.86V1320.5ZM1602.86 1320.5V1215.9H1604.25V1320.5ZM1604.25 1320.5V1266.6H1605.64V1320.5ZM1605.64 1320.5V1007.1H1607.04V1320.5ZM1607.04 1320.5V1209.3H1608.43V1320.5ZM1608.43 1320.5V1148.6H1609.83V1320.5ZM1609.83 1320.5V1179.0H1611.22V1320.5ZM1611.22 1320.5V1179.0H1612.62V1320.5ZM1612.62 1320.5V1212.4H1614.02V1320.5ZM1614.02 1320.5V1264.4H1615.41V1320.5ZM1615.41 1320.5V1270.0H1616.81V1320.5ZM1616.81 1320.5V1270.0H1618.20V1320.5ZM1618.20 1320.5V1300.3H1619.60V1320.5ZM1619.60 1320.5V1275.0H1620.99V1320.5ZM1620.99 1320.5V1280.1H1622.38V1320.5ZM1622.38 1320.5V1227.1H1623.78V1320.5ZM1623.78 1320.5V946.4H1625.17V1320.5ZM1625.17 1320.5V956.5H1626.57V1320.5ZM1626.57 1320.5V1103.1H1627.96V1320.5ZM1627.96 1320.5V1062.7H1629.36V1320.5ZM1629.36 1320.5V1238.2H1630.76V1320.5ZM1630.76 1320.5V1113.2H1632.15V1320.5ZM1632.15 1320.5V1002.0H1633.55V1320.5ZM1633.55 1320.5V1058.7H1634.94V1320.5ZM1634.94 1320.5V1123.4H1636.34V1320.5ZM1636.34 1320.5V1253.8H1637.73V1320.5ZM1637.73 1320.5V1264.9H1639.12V1320.5ZM1639.12 1320.5V1278.4H1640.52V1320.5ZM1640.52 1320.5V1290.2H1641.91V1320.5ZM1641.91 1320.5V1275.0H1643.31V1320.5ZM1643.31 1320.5V1158.7H1644.70V1320.5ZM1644.70 1320.5V1112.3H1646.10V1320.5ZM1646.10 1320.5V1052.6H1647.50V1320.5ZM1647.50 1320.5V1223.6H1648.89V1320.5ZM1648.89 1320.5V1032.4H1650.29V1320.5ZM1650.29 1320.5V1204.2H1651.68V1320.5ZM1651.68 1320.5V1280.1H1653.08V1320.5ZM1653.08 1320.5V1280.1H1654.47V1320.5ZM1654.47 1320.5V1254.8H1655.87V1320.5ZM1655.87 1320.5V1128.4H1657.26V1320.5ZM1657.26 1320.5V1211.0H1658.65V1320.5ZM1658.65 1320.5V1271.9H1660.05V1320.5ZM1660.05 1320.5V1275.0H1661.44V1320.5ZM1661.44 1320.5V1267.7H1662.84V1320.5ZM1662.84 1320.5V1264.1H1664.24V1320.5ZM1664.24 1320.5V1285.1H1665.63V1320.5ZM1665.63 1320.5V1244.7H1667.03V1320.5ZM1667.03 1320.5V1184.0H1668.42V1320.5ZM1668.42 1320.5V1224.5H1669.82V1320.5ZM1669.82 1320.5V1186.5H1671.21V1320.5ZM1671.21 1320.5V1148.6H1672.61V1320.5ZM1672.61 1320.5V1173.9H1674.00V1320.5ZM1674.00 1320.5V1160.9H1675.39V1320.5ZM1675.39 1320.5V1138.5H1676.79V1320.5ZM1676.79 1320.5V1219.4H1678.18V1320.5ZM1678.18 1320.5V1249.7H1679.58V1320.5ZM1679.58 1320.5V1280.1H1680.97V1320.5ZM1680.97 1320.5V1280.1H1682.37V1320.5ZM1855.35 1320.5V1275.0H1856.75V1320.5ZM1856.75 1320.5V1281.5H1858.14V1320.5ZM1858.14 1320.5V1285.1H1859.54V1320.5ZM1859.54 1320.5V1290.2H1860.93V1320.5ZM1860.93 1320.5V1280.1H1862.33V1320.5ZM1862.33 1320.5V1285.1H1863.72V1320.5ZM1863.72 1320.5V1280.1H1865.12V1320.5ZM1865.12 1320.5V1275.0H1866.51V1320.5ZM1866.51 1320.5V1244.7H1867.90V1320.5ZM1867.90 1320.5V1214.3H1869.30V1320.5ZM1869.30 1320.5V1200.2H1870.69V1320.5ZM1870.69 1320.5V1032.4H1872.09V1320.5ZM1872.09 1320.5V1077.9H1873.49V1320.5ZM1873.49 1320.5V1125.4H1874.88V1320.5ZM1874.88 1320.5V1222.3H1876.28V1320.5ZM1876.28 1320.5V1163.8H1877.67V1320.5ZM1877.67 1320.5V1049.4H1879.07V1320.5ZM1879.07 1320.5V1047.5H1880.46V1320.5ZM1880.46 1320.5V1123.4H1881.86V1320.5ZM1881.86 1320.5V991.9H1883.25V1320.5ZM1883.25 1320.5V966.7H1884.64V1320.5ZM1884.64 1320.5V1153.7H1886.04V1320.5ZM1886.04 1320.5V1218.0H1887.43V1320.5ZM1887.43 1320.5V1270.0H1888.83V1320.5ZM1888.83 1320.5V1234.6H1890.23V1320.5ZM1890.23 1320.5V1123.4H1891.62V1320.5ZM1891.62 1320.5V1224.5H1893.02V1320.5ZM1893.02 1320.5V1179.4H1894.41V1320.5ZM1894.41 1320.5V1159.8H1895.81V1320.5ZM1895.81 1320.5V1246.1H1897.20V1320.5ZM1897.20 1320.5V1239.6H1898.60V1320.5ZM1898.60 1320.5V1224.5H1899.99V1320.5ZM1899.99 1320.5V961.6H1901.38V1320.5ZM1901.38 1320.5V1002.0H1902.78V1320.5ZM1902.78 1320.5V1098.1H1904.17V1320.5ZM1904.17 1320.5V1098.1H1905.57V1320.5ZM1905.57 1320.5V1072.8H1906.96V1320.5ZM1906.96 1320.5V1270.0H1908.36V1320.5ZM1908.36 1320.5V1281.6H1909.76V1320.5ZM1909.76 1320.5V1295.2H1911.15V1320.5ZM1911.15 1320.5V1052.6H1912.55V1320.5ZM1912.55 1320.5V1239.6H1913.94V1320.5ZM1913.94 1320.5V1224.1H1915.34V1320.5ZM1915.34 1320.5V1260.6H1916.73V1320.5ZM1916.73 1320.5V1179.0H1918.12V1320.5ZM1918.12 1320.5V1214.3H1919.52V1320.5ZM1919.52 1320.5V1247.8H1920.91V1320.5ZM1920.91 1320.5V1166.8H1922.31V1320.5ZM1922.31 1320.5V1103.1H1923.70V1320.5ZM1923.70 1320.5V1268.8H1925.10V1320.5ZM1925.10 1320.5V1247.2H1926.50V1320.5ZM1926.50 1320.5V1148.6H1927.89V1320.5ZM1927.89 1320.5V1088.0H1929.29V1320.5ZM1929.29 1320.5V1107.3H1930.68V1320.5ZM1930.68 1320.5V1118.3H1932.08V1320.5ZM1932.08 1320.5V1022.3H1933.47V1320.5ZM1933.47 1320.5V1179.0H1934.87V1320.5ZM1934.87 1320.5V1240.1H1936.26V1320.5ZM1936.26 1320.5V1261.0H1937.65V1320.5ZM1937.65 1320.5V1244.7H1939.05V1320.5ZM1939.05 1320.5V1275.0H1940.44V1320.5ZM1940.44 1320.5V1280.1H1941.84V1320.5ZM1941.84 1320.5V1264.5H1943.24V1320.5ZM1943.24 1320.5V1225.6H1944.63V1320.5ZM1944.63 1320.5V1179.0H1946.03V1320.5ZM1946.03 1320.5V981.8H1947.42V1320.5ZM1947.42 1320.5V1032.4H1948.82V1320.5ZM1948.82 1320.5V1077.9H1950.21V1320.5ZM1950.21 1320.5V1139.1H1951.61V1320.5ZM1951.61 1320.5V1264.9H1953.00V1320.5ZM1953.00 1320.5V1275.0H1954.39V1320.5ZM1954.39 1320.5V1184.0H1955.79V1320.5ZM1955.79 1320.5V981.8H1957.18V1320.5ZM1957.18 1320.5V1179.0H1958.58V1320.5ZM1958.58 1320.5V1196.7H1959.98V1320.5ZM1959.98 1320.5V1184.0H1961.37V1320.5ZM1961.37 1320.5V1067.8H1962.77V1320.5ZM1962.77 1320.5V1072.8H1964.16V1320.5ZM1964.16 1320.5V1072.8H1965.56V1320.5ZM1965.56 1320.5V1067.8H1966.95V1320.5ZM1966.95 1320.5V1052.6H1968.35V1320.5ZM1968.35 1320.5V1168.8H1969.74V1320.5ZM1969.74 1320.5V1121.3H1971.13V1320.5ZM1971.13 1320.5V1088.0H1972.53V1320.5ZM1972.53 1320.5V1270.0H1973.92V1320.5ZM1973.92 1320.5V1209.3H1975.32V1320.5ZM1975.32 1320.5V1234.2H1976.71V1320.5ZM1976.71 1320.5V1249.7H1978.11V1320.5ZM1978.11 1320.5V1195.7H1979.51V1320.5ZM1979.51 1320.5V1189.1H1980.90V1320.5ZM1980.90 1320.5V1199.2H1982.30V1320.5ZM1982.30 1320.5V1199.2H1983.69V1320.5ZM1983.69 1320.5V1280.1H1985.09V1320.5ZM1985.09 1320.5V1255.7H1986.48V1320.5ZM1986.48 1320.5V1224.5H1987.88V1320.5ZM1987.88 1320.5V1260.4H1989.27V1320.5ZM1989.27 1320.5V1262.7H1990.66V1320.5ZM1990.66 1320.5V1242.6H1992.06V1320.5ZM1992.06 1320.5V1244.7H1993.45V1320.5ZM1993.45 1320.5V1239.6H1994.85V1320.5ZM1994.85 1320.5V1204.2H1996.25V1320.5ZM1996.25 1320.5V1280.1H1997.64V1320.5ZM1997.64 1320.5V1305.3H1999.04V1320.5ZM1999.04 1320.5V1270.0H2000.43V1320.5ZM2000.43 1320.5V1280.1H2001.83V1320.5ZM2001.83 1320.5V1270.0H2003.22V1320.5ZM2176.20 1320.5V1239.6H2177.60V1320.5ZM2177.60 1320.5V1244.7H2178.99V1320.5ZM2178.99 1320.5V1270.0H2180.39V1320.5ZM2180.39 1320.5V1254.8H2181.78V1320.5ZM2181.78 1320.5V1254.8H2183.18V1320.5ZM2183.18 1320.5V1052.6H2184.57V1320.5ZM2184.57 1320.5V1098.1H2185.97V1320.5ZM2185.97 1320.5V997.0H2187.36V1320.5ZM2187.36 1320.5V926.2H2188.76V1320.5ZM2188.76 1320.5V1017.2H2190.15V1320.5ZM2190.15 1320.5V1022.3H2191.55V1320.5ZM2191.55 1320.5V1047.5H2192.94V1320.5ZM2192.94 1320.5V997.0H2194.34V1320.5ZM2194.34 1320.5V1002.0H2195.73V1320.5ZM2195.73 1320.5V956.5H2197.12V1320.5ZM2197.12 1320.5V1128.4H2198.52V1320.5ZM2198.52 1320.5V1143.6H2199.91V1320.5ZM2199.91 1320.5V1148.6H2201.31V1320.5ZM2201.31 1320.5V1072.8H2202.70V1320.5ZM2202.70 1320.5V1244.7H2204.10V1320.5ZM2204.10 1320.5V1148.6H2205.49V1320.5ZM2205.49 1320.5V1204.2H2206.89V1320.5ZM2206.89 1320.5V1184.0H2208.28V1320.5ZM2208.28 1320.5V1032.4H2209.68V1320.5ZM2209.68 1320.5V1082.9H2211.07V1320.5ZM2211.07 1320.5V1214.3H2212.47V1320.5ZM2212.47 1320.5V1259.8H2213.87V1320.5ZM2213.87 1320.5V1072.8H2215.26V1320.5ZM2215.26 1320.5V956.5H2216.66V1320.5ZM2216.66 1320.5V1027.3H2218.05V1320.5ZM2218.05 1320.5V1108.2H2219.45V1320.5ZM2219.45 1320.5V1067.8H2220.84V1320.5ZM2220.84 1320.5V1032.4H2222.24V1320.5ZM2222.24 1320.5V1022.3H2223.63V1320.5ZM2223.63 1320.5V1072.8H2225.03V1320.5ZM2225.03 1320.5V1184.0H2226.42V1320.5ZM2226.42 1320.5V1254.8H2227.82V1320.5ZM2227.82 1320.5V1173.9H2229.21V1320.5ZM2229.21 1320.5V1280.1H2230.61V1320.5ZM2230.61 1320.5V1295.2H2232.00V1320.5ZM2232.00 1320.5V1275.0H2233.39V1320.5ZM2233.39 1320.5V1290.2H2234.79V1320.5ZM2234.79 1320.5V1204.2H2236.18V1320.5ZM2236.18 1320.5V1163.8H2237.58V1320.5ZM2237.58 1320.5V1088.0H2238.97V1320.5ZM2238.97 1320.5V1113.2H2240.37V1320.5ZM2240.37 1320.5V1163.8H2241.76V1320.5ZM2241.76 1320.5V1275.0H2243.16V1320.5ZM2243.16 1320.5V1264.9H2244.55V1320.5ZM2244.55 1320.5V1234.6H2245.95V1320.5ZM2245.95 1320.5V1189.1H2247.35V1320.5ZM2247.35 1320.5V1219.4H2248.74V1320.5ZM2248.74 1320.5V1037.4H2250.14V1320.5ZM2250.14 1320.5V1037.4H2251.53V1320.5ZM2251.53 1320.5V1254.8H2252.93V1320.5ZM2252.93 1320.5V1219.4H2254.32V1320.5ZM2254.32 1320.5V1244.7H2255.72V1320.5ZM2255.72 1320.5V1280.1H2257.11V1320.5ZM2257.11 1320.5V1264.9H2258.51V1320.5ZM2258.51 1320.5V1280.1H2259.90V1320.5ZM2259.90 1320.5V1280.1H2261.30V1320.5ZM2261.30 1320.5V1234.6H2262.69V1320.5ZM2262.69 1320.5V1077.9H2264.09V1320.5ZM2264.09 1320.5V1093.0H2265.48V1320.5ZM2265.48 1320.5V1057.6H2266.88V1320.5ZM2266.88 1320.5V1027.3H2268.27V1320.5ZM2268.27 1320.5V1128.4H2269.66V1320.5ZM2269.66 1320.5V1042.5H2271.06V1320.5ZM2271.06 1320.5V1118.3H2272.45V1320.5ZM2272.45 1320.5V976.8H2273.85V1320.5ZM2273.85 1320.5V1143.6H2275.24V1320.5ZM2275.24 1320.5V1148.6H2276.64V1320.5ZM2276.64 1320.5V1214.3H2278.03V1320.5ZM2278.03 1320.5V1209.3H2279.43V1320.5ZM2279.43 1320.5V1163.8H2280.82V1320.5ZM2280.82 1320.5V1275.0H2282.22V1320.5ZM2282.22 1320.5V1264.9H2283.62V1320.5ZM2283.62 1320.5V1199.2H2285.01V1320.5ZM2285.01 1320.5V1305.3H2286.41V1320.5ZM2286.41 1320.5V1280.1H2287.80V1320.5ZM2287.80 1320.5V1259.8H2289.20V1320.5ZM2289.20 1320.5V1118.3H2290.59V1320.5ZM2290.59 1320.5V1118.3H2291.99V1320.5ZM2291.99 1320.5V1027.3H2293.38V1320.5ZM2293.38 1320.5V1077.9H2294.78V1320.5ZM2294.78 1320.5V1007.1H2296.17V1320.5ZM2296.17 1320.5V1163.8H2297.57V1320.5ZM2297.57 1320.5V1098.1H2298.96V1320.5ZM2298.96 1320.5V1098.1H2300.36V1320.5ZM2300.36 1320.5V971.7H2301.75V1320.5ZM2301.75 1320.5V1002.0H2303.14V1320.5ZM2303.14 1320.5V1103.1H2304.54V1320.5ZM2304.54 1320.5V1158.7H2305.93V1320.5ZM2305.93 1320.5V1194.1H2307.33V1320.5ZM2307.33 1320.5V1300.3H2308.72V1320.5ZM2308.72 1320.5V1285.1H2310.12V1320.5ZM2310.12 1320.5V1300.3H2311.51V1320.5ZM2311.51 1320.5V1290.2H2312.91V1320.5Z" fill="#249171"/>
<path d="M167.7 815.0V1321.0" stroke="#3c3c3c" stroke-width="1.7" fill="none"/>
<path d="M167.0 1320.8H2417.0" stroke="#6a6a6a" stroke-width="1.6" fill="none"/>
<path d="M156.5 1320.5H168.0M156.5 1270.5H168.0M156.5 1219.5H168.0M156.5 1169.5H168.0M156.5 1118.5H168.0M156.5 1068.5H168.0M156.5 1017.5H168.0M156.5 967.5H168.0M156.5 916.5H168.0M156.5 866.5H168.0M156.5 815.5H168.0" stroke="#777" stroke-width="1.2" fill="none"/>
<path d="M168.5 1321.5V1332.5M489.5 1321.5V1332.5M810.5 1321.5V1332.5M1131.5 1321.5V1332.5M1453.5 1321.5V1332.5M1774.5 1321.5V1332.5M2095.5 1321.5V1332.5" stroke="#a6a6a6" stroke-width="2" fill="none"/>
<text transform="translate(148.6 1327.5) scale(1.08 1)" text-anchor="end" font-size="20.5" letter-spacing="1.1" fill="#444">0</text>
<text transform="translate(148.6 1277.0) scale(1.08 1)" text-anchor="end" font-size="20.5" letter-spacing="1.1" fill="#444">10</text>
<text transform="translate(148.6 1226.4) scale(1.08 1)" text-anchor="end" font-size="20.5" letter-spacing="1.1" fill="#444">20</text>
<text transform="translate(148.6 1175.8) scale(1.08 1)" text-anchor="end" font-size="20.5" letter-spacing="1.1" fill="#444">30</text>
<text transform="translate(148.6 1125.3) scale(1.08 1)" text-anchor="end" font-size="20.5" letter-spacing="1.1" fill="#444">40</text>
<text transform="translate(148.6 1074.8) scale(1.08 1)" text-anchor="end" font-size="20.5" letter-spacing="1.1" fill="#444">50</text>
<text transform="translate(148.6 1024.2) scale(1.08 1)" text-anchor="end" font-size="20.5" letter-spacing="1.1" fill="#444">60</text>
<text transform="translate(148.6 973.7) scale(1.08 1)" text-anchor="end" font-size="20.5" letter-spacing="1.1" fill="#444">70</text>
<text transform="translate(148.6 923.1) scale(1.08 1)" text-anchor="end" font-size="20.5" letter-spacing="1.1" fill="#444">80</text>
<text transform="translate(148.6 872.5) scale(1.08 1)" text-anchor="end" font-size="20.5" letter-spacing="1.1" fill="#444">90</text>
<text transform="translate(148.6 822.0) scale(1.08 1)" text-anchor="end" font-size="20.5" letter-spacing="1.1" fill="#444">100</text>
<text x="169.2" y="1356.6" text-anchor="middle" font-size="19.2" letter-spacing="1.95" fill="#000" stroke="#000" stroke-width=".3">ven. 10</text>
<text x="490.3" y="1356.6" text-anchor="middle" font-size="19.2" letter-spacing="1.95" fill="#000" stroke="#000" stroke-width=".3">sam. 11</text>
<text x="811.5" y="1356.6" text-anchor="middle" font-size="19.2" letter-spacing="1.95" fill="#000" stroke="#000" stroke-width=".3">dim. 12</text>
<text x="1132.6" y="1356.6" text-anchor="middle" font-size="19.2" letter-spacing="1.95" fill="#000" stroke="#000" stroke-width=".3">lun. 13</text>
<text x="1453.8" y="1356.6" text-anchor="middle" font-size="19.2" letter-spacing="1.95" fill="#000" stroke="#000" stroke-width=".3">mar. 14</text>
<text x="1775.0" y="1356.6" text-anchor="middle" font-size="19.2" letter-spacing="1.95" fill="#000" stroke="#000" stroke-width=".3">mer. 15</text>
<text x="2096.1" y="1356.6" text-anchor="middle" font-size="19.2" letter-spacing="1.95" fill="#000" stroke="#000" stroke-width=".3">jeu. 16</text>
<text transform="translate(84.5 1068) rotate(-90)" text-anchor="middle" font-size="20.5" fill="#444">kW</text>
<rect x="561.90" y="806.20" width="411.80" height="57.70" rx="10" fill="#fff" stroke="#808080" stroke-width="4.2"/>
<text x="777.6" y="845.5" text-anchor="middle" font-size="27.8" letter-spacing=".15" fill="#000" xml:space="preserve">Consommation: 1 977 kWh</text>
<rect x="1099.70" y="806.20" width="411.80" height="57.70" rx="10" fill="#fff" stroke="#808080" stroke-width="4.2"/>
<text x="1316.1" y="845.5" text-anchor="middle" font-size="27.8" letter-spacing=".15" fill="#000" xml:space="preserve">P Max :  96 kW</text>
<rect x="1609.60" y="806.20" width="411.80" height="57.70" rx="10" fill="#fff" stroke="#808080" stroke-width="4.2"/>
<text x="1825.5" y="845.5" text-anchor="middle" font-size="27.8" letter-spacing=".15" fill="#000" xml:space="preserve">P min : 0 kW</text>
<path d="M2322.2 1322.3H2437.8V1371Q2437.8 1380.2 2428 1380.2H2322.2Z" fill="#fff"/>
<g fill="none" stroke="#0870b8" stroke-width="5" stroke-linecap="round" stroke-linejoin="miter">
<path d="M2360.8 1342.6A12.6 12.6 0 1 0 2362 1350.6H2350.5"/>
<path d="M2370.3 1350.2A6.8 6.8 0 1 1 2381.6 1351.6L2372.3 1360.9H2385.8" stroke-linecap="butt"/>
</g>
<circle cx="2370.4" cy="1350" r="2.5" fill="#0870b8"/>
<path d="M2392.55 1324.6L2383.5 1338.2L2391.7 1341L2389.2 1363.15L2399.9 1338L2392 1335.6Z" fill="#ea5f28"/>
<path d="M2403.3 1339.1H2424.2L2419.7 1344.8H2400.75ZM2399.3 1348.2H2418.3L2414 1353.8H2397.1ZM2395.4 1357.2H2416.9L2411.8 1363.15H2392.8Z" fill="#f2921f"/>
<text x="2393.6" y="1334.6" font-size="7.4" font-weight="bold" fill="#ea5f28" textLength="30.4" lengthAdjust="spacingAndGlyphs">FRANCE</text>
<text x="2339.4" y="1368.4" font-size="3.3" fill="#2b7fc0" textLength="74.6" lengthAdjust="spacingAndGlyphs">Optimisation des ressources énergétiques</text>
</svg>
</body></html>
